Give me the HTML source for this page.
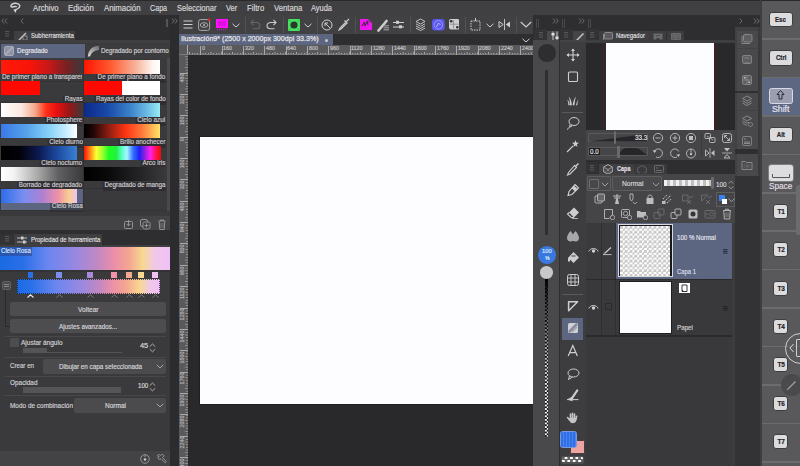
<!DOCTYPE html>
<html><head><meta charset="utf-8"><style>
html,body{margin:0;padding:0;width:800px;height:466px;overflow:hidden;background:#2e2d30}
body{position:relative;font-family:"Liberation Sans",sans-serif}
body div{position:absolute;box-sizing:border-box}
.t{white-space:nowrap;line-height:1;-webkit-text-stroke:0.18px currentColor}
</style></head><body>
<div style="left:0px;top:0px;width:800px;height:466px;background:#2e2d30;"></div>
<div style="left:0px;top:0px;width:800px;height:1px;background:#29282b;"></div>
<div style="left:0px;top:1px;width:761px;height:13.5px;background:#403f42;"></div>
<svg style="position:absolute;left:5px;top:0px;" width="20" height="15" viewBox="0 0 20 15"><path d="M11.2 6.6 C9 6 6.5 8 6 6.5 C5.5 4.8 8 3.2 10.5 3.3 C13.5 3.4 15.5 5 14.5 7 C13.8 8.5 11.5 9.5 9.5 10.3" fill="none" stroke="#d2d1d4" stroke-width="1.5" stroke-linecap="round"/><path d="M8.6 9.8 L11.6 9.6 L10.6 12.9 Z" fill="#d2d1d4"/></svg>
<div class="t" style="left:33.1px;top:3.80px;font-size:8.5px;color:#d8d7da;font-weight:normal;transform:scaleX(0.905011301615304);transform-origin:0 0;">Archivo</div>
<div class="t" style="left:68px;top:3.80px;font-size:8.5px;color:#d8d7da;font-weight:normal;transform:scaleX(0.9236891516968865);transform-origin:0 0;">Edición</div>
<div class="t" style="left:103.5px;top:3.80px;font-size:8.5px;color:#d8d7da;font-weight:normal;transform:scaleX(0.9197574612174186);transform-origin:0 0;">Animación</div>
<div class="t" style="left:149.8px;top:3.80px;font-size:8.5px;color:#d8d7da;font-weight:normal;transform:scaleX(0.8415774964146059);transform-origin:0 0;">Capa</div>
<div class="t" style="left:176.5px;top:3.80px;font-size:8.5px;color:#d8d7da;font-weight:normal;transform:scaleX(0.8894158458861878);transform-origin:0 0;">Seleccionar</div>
<div class="t" style="left:225.6px;top:3.80px;font-size:8.5px;color:#d8d7da;font-weight:normal;transform:scaleX(0.885720934220035);transform-origin:0 0;">Ver</div>
<div class="t" style="left:246.5px;top:3.80px;font-size:8.5px;color:#d8d7da;font-weight:normal;transform:scaleX(0.9133137820207894);transform-origin:0 0;">Filtro</div>
<div class="t" style="left:273.5px;top:3.80px;font-size:8.5px;color:#d8d7da;font-weight:normal;transform:scaleX(0.9103635493960871);transform-origin:0 0;">Ventana</div>
<div class="t" style="left:311.3px;top:3.80px;font-size:8.5px;color:#d8d7da;font-weight:normal;transform:scaleX(0.8748817330592797);transform-origin:0 0;">Ayuda</div>
<svg style="position:absolute;left:0.8px;top:17.8px;" width="7" height="6" viewBox="0 0 7 6"><path d="M3 0.5 L0.8 3 L3 5.5 M6 0.5 L3.8 3 L6 5.5" fill="none" stroke="#6e6d70" stroke-width="1"/></svg>
<svg style="position:absolute;left:19.5px;top:17.8px;" width="4" height="6" viewBox="0 0 4 6"><path d="M3.2 0.5 L1 3 L3.2 5.5" fill="none" stroke="#6e6d70" stroke-width="1"/></svg>
<div style="left:166px;top:19px;width:2px;height:8px;background:#555457;"></div>
<div style="left:0px;top:30px;width:170px;height:10px;background:#2e2d30;"></div>
<svg style="position:absolute;left:5px;top:31px;" width="4.5" height="6" viewBox="0 0 4.5 6"><path d="M0 0.6 H4.2 M0 2.8 H4.2 M0 5 H4.2" stroke="#6a696c" stroke-width="0.75"/></svg>
<div style="left:14px;top:31px;width:61px;height:10px;background:#3f3e41;"></div>
<svg style="position:absolute;left:18px;top:31px;" width="10" height="10" viewBox="0 0 10 10"><path d="M1 9 L8 2" stroke="#bdbcbf" stroke-width="1.6"/><rect x="5" y="5" width="4" height="4" fill="none" stroke="#9a999c" stroke-width="0.8"/></svg>
<div class="t" style="left:30.8px;top:33.01px;font-size:6.6px;color:#dcdbde;font-weight:normal;transform:scaleX(0.9114734111439871);transform-origin:0 0;-webkit-text-stroke:0.2px #dcdbde">Subherramienta</div>
<div style="left:0px;top:40px;width:170px;height:3px;background:#3f3e41;"></div>
<div style="left:0px;top:43px;width:170px;height:173px;background:#3a393c;"></div>
<div style="left:1px;top:44px;width:84px;height:14px;background:#5d6680;"></div>
<svg style="position:absolute;left:4px;top:46px;" width="10" height="10" viewBox="0 0 10 10"><rect x="0.5" y="0.5" width="9" height="9" rx="1.5" fill="#8f93a3" stroke="#b5b8c4" stroke-width="0.8"/><path d="M1 9 L9 1" stroke="#a8abb8" stroke-width="2"/></svg>
<div class="t" style="left:16.9px;top:46.81px;font-size:7.2px;color:#e8e7ea;font-weight:normal;transform:scaleX(0.8659831435047755);transform-origin:0 0;">Degradado</div>
<div style="left:86px;top:44px;width:84px;height:14px;background:#3c3b3e;"></div>
<svg style="position:absolute;left:87px;top:45px;" width="13" height="12" viewBox="0 0 13 12"><defs><linearGradient id="lf" x1="0" y1="1" x2="1" y2="0"><stop offset="0" stop-color="#d8d7da"/><stop offset="1" stop-color="#6a696c"/></linearGradient></defs><path d="M0.8 11.5 C1.5 5 5 1.2 12 0.8 L12 5 C7.5 5.2 4.5 7.5 3 11.5 Z" fill="url(#lf)"/></svg>
<div style="left:100px;top:45px;width:69px;height:12px;overflow:hidden">
<div class="t" style="left:0.8px;top:1.81px;font-size:7.2px;color:#d4d3d6;font-weight:normal;transform:scaleX(0.87);transform-origin:0 0;">Degradado por contorno</div>
</div>
<div style="left:82.5px;top:59.5px;width:1.5px;height:21.5px;background:#313033;"></div>
<div style="left:0px;top:80.5px;width:167px;height:0.6px;background:#333235;"></div>
<div style="left:1px;top:59.5px;width:82px;height:14px;background:linear-gradient(90deg,#ff1a0a 0%,#f81408 35%,#c81818 58%,#7a2022 80%,#3a393c 100%);"></div>
<div style="left:1px;top:73.5px;width:81px;height:7px;overflow:hidden"><div class="t" style="left:1px;top:-0.28px;font-size:7.3px;color:#d0cfd2;transform:scaleX(0.865);transform-origin:0 0">De primer plano a transparente</div></div>
<div style="left:0px;top:80.5px;width:167px;height:0.6px;background:#333235;"></div>
<div style="left:84px;top:59.5px;width:76px;height:14px;background:linear-gradient(90deg,#ff1500 0%,#ff5a30 35%,#f8b8a0 70%,#fff4f0 90%,#ffffff 100%);"></div>
<div class="t" style="right:634.5px;top:74.3px;height:9px;font-size:7.3px;line-height:0;color:transparent;background:rgba(40,39,42,0.55);transform:scaleX(0.865);transform-origin:100% 0;padding-left:2px">De primer plano a fondo</div>
<div class="t" style="right:634.5px;top:73.22px;font-size:7.3px;color:#d0cfd2;font-weight:normal;transform:scaleX(0.865);transform-origin:100% 0;">De primer plano a fondo</div>
<div style="left:82.5px;top:81.0px;width:1.5px;height:21.5px;background:#313033;"></div>
<div style="left:0px;top:102.0px;width:167px;height:0.6px;background:#333235;"></div>
<div style="left:1px;top:81.0px;width:39px;height:14px;background:linear-gradient(90deg,#ff0800 0%,#ff0800 100%);"></div>
<div class="t" style="right:717.5px;top:95.8px;height:9px;font-size:7.3px;line-height:0;color:transparent;background:rgba(40,39,42,0.55);transform:scaleX(0.865);transform-origin:100% 0;padding-left:2px">Rayas</div>
<div class="t" style="right:717.5px;top:94.72px;font-size:7.3px;color:#d0cfd2;font-weight:normal;transform:scaleX(0.865);transform-origin:100% 0;">Rayas</div>
<div style="left:0px;top:102.0px;width:167px;height:0.6px;background:#333235;"></div>
<div style="left:84px;top:81.0px;width:76px;height:14px;background:linear-gradient(90deg,#ff0800 0%,#ff0800 50%,#ffffff 50%,#ffffff 100%);"></div>
<div class="t" style="right:634.5px;top:95.8px;height:9px;font-size:7.3px;line-height:0;color:transparent;background:rgba(40,39,42,0.55);transform:scaleX(0.865);transform-origin:100% 0;padding-left:2px">Rayas del color de fondo</div>
<div class="t" style="right:634.5px;top:94.72px;font-size:7.3px;color:#d0cfd2;font-weight:normal;transform:scaleX(0.865);transform-origin:100% 0;">Rayas del color de fondo</div>
<div style="left:82.5px;top:102.5px;width:1.5px;height:21.5px;background:#313033;"></div>
<div style="left:0px;top:123.5px;width:167px;height:0.6px;background:#333235;"></div>
<div style="left:1px;top:102.5px;width:82px;height:14px;background:linear-gradient(90deg,#ffffff 0%,#fce8e0 25%,#f4a888 42%,#ff3018 55%,#e81010 68%,#901818 85%,#3a393c 100%);"></div>
<div class="t" style="right:717.5px;top:117.3px;height:9px;font-size:7.3px;line-height:0;color:transparent;background:rgba(40,39,42,0.55);transform:scaleX(0.865);transform-origin:100% 0;padding-left:2px">Photosphere</div>
<div class="t" style="right:717.5px;top:116.22px;font-size:7.3px;color:#d0cfd2;font-weight:normal;transform:scaleX(0.865);transform-origin:100% 0;">Photosphere</div>
<div style="left:0px;top:123.5px;width:167px;height:0.6px;background:#333235;"></div>
<div style="left:84px;top:102.5px;width:76px;height:14px;background:linear-gradient(90deg,#0c2a88 0%,#1848a8 30%,#3a80c8 60%,#70c0e8 85%,#98ecf4 100%);"></div>
<div class="t" style="right:634.5px;top:117.3px;height:9px;font-size:7.3px;line-height:0;color:transparent;background:rgba(40,39,42,0.55);transform:scaleX(0.865);transform-origin:100% 0;padding-left:2px">Cielo azul</div>
<div class="t" style="right:634.5px;top:116.22px;font-size:7.3px;color:#d0cfd2;font-weight:normal;transform:scaleX(0.865);transform-origin:100% 0;">Cielo azul</div>
<div style="left:82.5px;top:124.0px;width:1.5px;height:21.5px;background:#313033;"></div>
<div style="left:0px;top:145.0px;width:167px;height:0.6px;background:#333235;"></div>
<div style="left:1px;top:124.0px;width:76px;height:14px;background:linear-gradient(90deg,#3a78e8 0%,#58a4ea 35%,#84d0f8 62%,#c4ecff 85%,#ffffff 100%);"></div>
<div class="t" style="right:717.5px;top:138.8px;height:9px;font-size:7.3px;line-height:0;color:transparent;background:rgba(40,39,42,0.55);transform:scaleX(0.865);transform-origin:100% 0;padding-left:2px">Cielo diurno</div>
<div class="t" style="right:717.5px;top:137.72px;font-size:7.3px;color:#d0cfd2;font-weight:normal;transform:scaleX(0.865);transform-origin:100% 0;">Cielo diurno</div>
<div style="left:0px;top:145.0px;width:167px;height:0.6px;background:#333235;"></div>
<div style="left:84px;top:124.0px;width:76px;height:14px;background:linear-gradient(90deg,#000000 0%,#200606 12%,#9a2014 35%,#ff3412 55%,#ff7438 75%,#ffe468 100%);"></div>
<div class="t" style="right:634.5px;top:138.8px;height:9px;font-size:7.3px;line-height:0;color:transparent;background:rgba(40,39,42,0.55);transform:scaleX(0.865);transform-origin:100% 0;padding-left:2px">Brillo anochecer</div>
<div class="t" style="right:634.5px;top:137.72px;font-size:7.3px;color:#d0cfd2;font-weight:normal;transform:scaleX(0.865);transform-origin:100% 0;">Brillo anochecer</div>
<div style="left:82.5px;top:145.5px;width:1.5px;height:21.5px;background:#313033;"></div>
<div style="left:0px;top:166.5px;width:167px;height:0.6px;background:#333235;"></div>
<div style="left:1px;top:145.5px;width:76px;height:14px;background:linear-gradient(90deg,#000000 0%,#02020a 25%,#0c1a52 50%,#1c4ca2 75%,#3a80d4 100%);"></div>
<div class="t" style="right:717.5px;top:160.3px;height:9px;font-size:7.3px;line-height:0;color:transparent;background:rgba(40,39,42,0.55);transform:scaleX(0.865);transform-origin:100% 0;padding-left:2px">Cielo nocturno</div>
<div class="t" style="right:717.5px;top:159.22px;font-size:7.3px;color:#d0cfd2;font-weight:normal;transform:scaleX(0.865);transform-origin:100% 0;">Cielo nocturno</div>
<div style="left:0px;top:166.5px;width:167px;height:0.6px;background:#333235;"></div>
<div style="left:84px;top:145.5px;width:77px;height:14px;background:linear-gradient(90deg,#ff1010 0%,#ff8818 8%,#ffff30 16%,#a0ff30 24%,#20ff20 32%,#20f040 42%,#60ffd0 50%,#a8f4ff 56%,#3070ff 64%,#2020f0 72%,#9020e0 79%,#ff20f0 86%,#ff1030 95%,#e01010 100%);"></div>
<div class="t" style="right:634.5px;top:160.3px;height:9px;font-size:7.3px;line-height:0;color:transparent;background:rgba(40,39,42,0.55);transform:scaleX(0.865);transform-origin:100% 0;padding-left:2px">Arco iris</div>
<div class="t" style="right:634.5px;top:159.22px;font-size:7.3px;color:#d0cfd2;font-weight:normal;transform:scaleX(0.865);transform-origin:100% 0;">Arco iris</div>
<div style="left:82.5px;top:167.0px;width:1.5px;height:21.5px;background:#313033;"></div>
<div style="left:0px;top:188.0px;width:167px;height:0.6px;background:#333235;"></div>
<div style="left:1px;top:167.0px;width:82px;height:14px;background:linear-gradient(90deg,#ffffff 0%,#f4f4f4 15%,#a8a8a8 45%,#606062 70%,#3a393c 100%);"></div>
<div class="t" style="right:717.5px;top:181.8px;height:9px;font-size:7.3px;line-height:0;color:transparent;background:rgba(40,39,42,0.55);transform:scaleX(0.865);transform-origin:100% 0;padding-left:2px">Borrado de degradado</div>
<div class="t" style="right:717.5px;top:180.72px;font-size:7.3px;color:#d0cfd2;font-weight:normal;transform:scaleX(0.865);transform-origin:100% 0;">Borrado de degradado</div>
<div style="left:0px;top:188.0px;width:167px;height:0.6px;background:#333235;"></div>
<div style="left:84px;top:167.0px;width:82px;height:14px;background:linear-gradient(90deg,#000000 0%,#0a0a0b 30%,#222124 65%,#3a393c 100%);"></div>
<div class="t" style="right:634.5px;top:181.8px;height:9px;font-size:7.3px;line-height:0;color:transparent;background:rgba(40,39,42,0.55);transform:scaleX(0.865);transform-origin:100% 0;padding-left:2px">Degradado de manga</div>
<div class="t" style="right:634.5px;top:180.72px;font-size:7.3px;color:#d0cfd2;font-weight:normal;transform:scaleX(0.865);transform-origin:100% 0;">Degradado de manga</div>
<div style="left:82.5px;top:188.5px;width:1.5px;height:21.5px;background:#313033;"></div>
<div style="left:0px;top:209.5px;width:167px;height:0.6px;background:#333235;"></div>
<div style="left:1px;top:188.5px;width:82px;height:21px;background:#5d6680;"></div>
<div style="left:1px;top:188.5px;width:76px;height:14px;background:linear-gradient(90deg,#2a6ee8 0%,#7a8ef0 30%,#b080d0 55%,#f090a8 75%,#f8d090 90%,#f0c0f8 100%);"></div>
<div class="t" style="right:717.5px;top:203.3px;height:9px;font-size:7.3px;line-height:0;color:transparent;background:rgba(40,39,42,0.55);transform:scaleX(0.865);transform-origin:100% 0;padding-left:2px">Cielo Rosa</div>
<div class="t" style="right:717.5px;top:202.22px;font-size:7.3px;color:#d0cfd2;font-weight:normal;transform:scaleX(0.865);transform-origin:100% 0;">Cielo Rosa</div>
<div style="left:0px;top:209.5px;width:167px;height:0.6px;background:#333235;"></div>
<div style="left:167px;top:58px;width:3px;height:153px;background:#4a494c;"></div>
<div style="left:0px;top:216px;width:170px;height:14px;background:#434245;"></div>
<svg style="position:absolute;left:124px;top:220px;" width="9" height="9" viewBox="0 0 9 9"><rect x="0.5" y="1.5" width="8" height="7" rx="1" fill="none" stroke="#9c9b9e" stroke-width="0.9"/><path d="M4.5 0 V5.5 M2.5 3.8 L4.5 5.8 L6.5 3.8" fill="none" stroke="#9c9b9e" stroke-width="0.9"/></svg>
<svg style="position:absolute;left:140px;top:219px;" width="11" height="11" viewBox="0 0 11 11"><rect x="0.5" y="0.5" width="7" height="7" rx="1.5" fill="none" stroke="#9c9b9e" stroke-width="0.9"/><rect x="3" y="3" width="7" height="7" rx="1.5" fill="#434245" stroke="#9c9b9e" stroke-width="0.9"/><path d="M6.5 4.5 V8.5 M4.5 6.5 H8.5" stroke="#9c9b9e" stroke-width="0.9"/></svg>
<svg style="position:absolute;left:158px;top:219px;" width="8" height="11" viewBox="0 0 8 11"><path d="M0.5 2 H7.5 M2.5 2 V1 H5.5 V2 M1.2 2.5 L1.8 10.5 H6.2 L6.8 2.5" fill="none" stroke="#9c9b9e" stroke-width="0.9"/><path d="M3 4 V9 M5 4 V9" stroke="#9c9b9e" stroke-width="0.6"/></svg>
<div style="left:0px;top:234px;width:13px;height:11px;background:#333235;"></div>
<svg style="position:absolute;left:5px;top:235.5px;" width="4.5" height="6" viewBox="0 0 4.5 6"><path d="M0 0.6 H4.2 M0 2.8 H4.2 M0 5 H4.2" stroke="#6a696c" stroke-width="0.75"/></svg>
<div style="left:14px;top:234px;width:88px;height:11px;background:#3f3e41;"></div>
<svg style="position:absolute;left:17px;top:236px;" width="11" height="8" viewBox="0 0 11 8"><path d="M0 2 H10 M0 6 H10" stroke="#bdbcbf" stroke-width="1"/><rect x="4" y="0.5" width="2.5" height="3" fill="#d0cfd2"/><rect x="6" y="4.5" width="2.5" height="3" fill="#d0cfd2"/></svg>
<div class="t" style="left:30.6px;top:236.91px;font-size:6.6px;color:#dcdbde;font-weight:normal;transform:scaleX(0.9094553792311811);transform-origin:0 0;-webkit-text-stroke:0.2px #dcdbde">Propiedad de herramienta</div>
<div style="left:0px;top:245px;width:170px;height:2px;background:#3f3e41;"></div>
<div style="left:0px;top:247px;width:170px;height:219px;background:#3a393c;"></div>
<div style="left:0px;top:247px;width:170px;height:23px;background:linear-gradient(90deg,#1a6ae4 0%,#2a70e8 14%,#6a86f0 28%,#9a88e0 45%,#c488c0 58%,#ee90a8 68%,#f4a690 76%,#f8d890 84%,#f0c8e8 91%,#f0c0f8 100%);"></div>
<div style="left:0;top:246.5px;height:9.2px;width:32px;background:rgba(50,70,130,0.55)"></div>
<div class="t" style="left:1.2px;top:246.92px;font-size:7.3px;color:#dde6ff;font-weight:normal;transform:scaleX(0.834644029047993);transform-origin:0 0;">Cielo Rosa</div>
<div style="left:0px;top:270px;width:170px;height:2px;background:#333235;"></div>
<div style="left:27.5px;top:272.3px;width:5.5px;height:5.5px;background:#2a6ee8;"></div>
<svg style="position:absolute;left:27.0px;top:294px;" width="7" height="4" viewBox="0 0 7 4"><path d="M0.5 3.5 L3.5 0.8 L6.5 3.5" fill="none" stroke="#e8e7ea" stroke-width="1.2"/></svg>
<div style="left:56px;top:272.3px;width:5.5px;height:5.5px;background:#7a8ef0;"></div>
<svg style="position:absolute;left:55.5px;top:294px;" width="7" height="4" viewBox="0 0 7 4"><path d="M0.5 3.5 L3.5 0.8 L6.5 3.5" fill="none" stroke="#8a898c" stroke-width="0.8"/></svg>
<div style="left:87px;top:272.3px;width:5.5px;height:5.5px;background:#a888d8;"></div>
<svg style="position:absolute;left:86.5px;top:294px;" width="7" height="4" viewBox="0 0 7 4"><path d="M0.5 3.5 L3.5 0.8 L6.5 3.5" fill="none" stroke="#8a898c" stroke-width="0.8"/></svg>
<div style="left:111px;top:272.3px;width:5.5px;height:5.5px;background:#f092a8;"></div>
<svg style="position:absolute;left:110.5px;top:294px;" width="7" height="4" viewBox="0 0 7 4"><path d="M0.5 3.5 L3.5 0.8 L6.5 3.5" fill="none" stroke="#8a898c" stroke-width="0.8"/></svg>
<div style="left:126px;top:272.3px;width:5.5px;height:5.5px;background:#f4a890;"></div>
<svg style="position:absolute;left:125.5px;top:294px;" width="7" height="4" viewBox="0 0 7 4"><path d="M0.5 3.5 L3.5 0.8 L6.5 3.5" fill="none" stroke="#8a898c" stroke-width="0.8"/></svg>
<div style="left:138px;top:272.3px;width:5.5px;height:5.5px;background:#f8d890;"></div>
<svg style="position:absolute;left:137.5px;top:294px;" width="7" height="4" viewBox="0 0 7 4"><path d="M0.5 3.5 L3.5 0.8 L6.5 3.5" fill="none" stroke="#8a898c" stroke-width="0.8"/></svg>
<div style="left:152px;top:272.3px;width:5.5px;height:5.5px;background:#f0c0f4;"></div>
<svg style="position:absolute;left:151.5px;top:294px;" width="7" height="4" viewBox="0 0 7 4"><path d="M0.5 3.5 L3.5 0.8 L6.5 3.5" fill="none" stroke="#8a898c" stroke-width="0.8"/></svg>
<div style="left:17px;top:279px;width:143px;height:15px;background:linear-gradient(90deg,#1a6ae4 0%,#2a70e8 10%,#6a86f0 27%,#9a88e0 45%,#c488c0 58%,#ee90a8 67%,#f4a690 76%,#f8d890 86%,#f0c8e8 93%,#f0c0f8 100%);"></div>
<div style="left:17px;top:279px;width:143px;height:15px;border:0.6px dotted rgba(20,20,20,0.7)"></div>
<svg style="position:absolute;left:2px;top:281px;" width="10" height="10" viewBox="0 0 10 10"><rect x="0.5" y="0.5" width="8" height="8" rx="1.5" fill="#4a494c" stroke="#6a696c" stroke-width="0.8"/><path d="M2 3.5 H7 M2 5.5 H7" stroke="#9a999c" stroke-width="0.8"/></svg>
<div style="left:5.3px;top:289.5px;width:1.2px;height:37px;background:#29282b;"></div>
<div style="left:5.3px;top:325.5px;width:4.7px;height:1.2px;background:#29282b;"></div>
<div style="left:10px;top:302px;width:156px;height:14px;background:#4d4c4f;border-radius:2px"></div>
<div class="t" style="left:77.5px;top:305.82px;font-size:7px;color:#d6d5d8;font-weight:normal;transform:scaleX(0.9407175839619124);transform-origin:0 0;">Voltear</div>
<div style="left:10px;top:319px;width:156px;height:14px;background:#4d4c4f;border-radius:2px"></div>
<div class="t" style="left:58.75px;top:322.67px;font-size:7px;color:#d6d5d8;font-weight:normal;transform:scaleX(0.8995309298426837);transform-origin:0 0;">Ajustes avanzados...</div>
<div style="left:5px;top:335.5px;width:161px;height:1px;background:#48474a;"></div>
<div style="left:5px;top:356.5px;width:161px;height:1px;background:#48474a;"></div>
<div style="left:5px;top:376px;width:161px;height:1px;background:#48474a;"></div>
<div style="left:5px;top:395px;width:161px;height:1px;background:#48474a;"></div>
<div style="left:10px;top:338px;width:9px;height:9px;background:#4d4c4f;border-radius:1px"></div>
<div class="t" style="left:20.5px;top:339.27px;font-size:7px;color:#d0cfd2;font-weight:normal;transform:scaleX(0.9274034449406581);transform-origin:0 0;">Ajustar ángulo</div>
<div style="left:23px;top:348px;width:24px;height:5px;background:#555457;"></div>
<div style="left:47px;top:352px;width:75px;height:1px;background:#555457;"></div>
<div class="t" style="left:139.9px;top:341.51px;font-size:7.2px;color:#dcdbde;font-weight:normal;transform:scaleX(1.0240079922575003);transform-origin:0 0;">45</div>
<svg style="position:absolute;left:148.5px;top:342.5px;" width="7" height="10" viewBox="0 0 7 10"><path d="M0.8 3.6 L3.5 1 L6.2 3.6 M0.8 6.2 L3.5 8.8 L6.2 6.2" fill="none" stroke="#bcbbbe" stroke-width="0.9"/></svg>
<div class="t" style="left:10px;top:362.27px;font-size:7px;color:#d0cfd2;font-weight:normal;transform:scaleX(0.8813100306392941);transform-origin:0 0;">Crear en</div>
<div style="left:43px;top:359px;width:123px;height:15px;background:#4b4a4d;border-radius:2px"></div>
<div class="t" style="left:59px;top:362.57px;font-size:7px;color:#d6d5d8;font-weight:normal;transform:scaleX(0.9038317566187981);transform-origin:0 0;">Dibujar en capa seleccionada</div>
<svg style="position:absolute;left:156px;top:364px;" width="8" height="5" viewBox="0 0 8 5"><path d="M0.8 0.8 L4 4 L7.2 0.8" fill="none" stroke="#b0afb2" stroke-width="0.9"/></svg>
<div class="t" style="left:10px;top:378.82px;font-size:7px;color:#d0cfd2;font-weight:normal;transform:scaleX(0.9177900033895654);transform-origin:0 0;">Opacidad</div>
<div style="left:23px;top:387px;width:98px;height:5.5px;background:#555457;"></div>
<div class="t" style="left:137.6px;top:381.61px;font-size:7.2px;color:#dcdbde;font-weight:normal;transform:scaleX(0.8575026276627851);transform-origin:0 0;">100</div>
<svg style="position:absolute;left:148.5px;top:382.2px;" width="7" height="10" viewBox="0 0 7 10"><path d="M0.8 3.6 L3.5 1 L6.2 3.6 M0.8 6.2 L3.5 8.8 L6.2 6.2" fill="none" stroke="#bcbbbe" stroke-width="0.9"/></svg>
<div class="t" style="left:10px;top:401.57px;font-size:7px;color:#d0cfd2;font-weight:normal;transform:scaleX(0.9199661401351199);transform-origin:0 0;">Modo de combinación</div>
<div style="left:74px;top:398px;width:92px;height:15px;background:#4b4a4d;border-radius:2px"></div>
<div class="t" style="left:105px;top:401.87px;font-size:7px;color:#d6d5d8;font-weight:normal;transform:scaleX(0.9309542280837858);transform-origin:0 0;">Normal</div>
<svg style="position:absolute;left:156px;top:403px;" width="8" height="5" viewBox="0 0 8 5"><path d="M0.8 0.8 L4 4 L7.2 0.8" fill="none" stroke="#b0afb2" stroke-width="0.9"/></svg>
<div style="left:0px;top:451px;width:170px;height:15px;background:#434245;"></div>
<svg style="position:absolute;left:140px;top:454px;" width="10" height="10" viewBox="0 0 10 10"><circle cx="5" cy="5" r="4.3" fill="none" stroke="#9c9b9e" stroke-width="0.9"/><circle cx="5" cy="5.5" r="1.3" fill="#c8c7ca"/><path d="M5 0.7 V3" stroke="#9c9b9e" stroke-width="0.9"/></svg>
<svg style="position:absolute;left:156px;top:453px;" width="11" height="11" viewBox="0 0 11 11"><path d="M1.2 2.8 L2.8 1.2 L4.2 2.6 L4.8 2 C6 1 7.8 1.6 8 3 L6.5 4.5 L7.2 5.2 L10 8.2 C10.4 8.8 9.6 9.8 9 9.6 L5.8 6.5 L5.1 5.8 C4 6.8 2.2 6.4 1.8 5 L3.2 3.6 Z" fill="none" stroke="#9c9b9e" stroke-width="0.9" stroke-linejoin="round"/></svg>
<div style="left:170px;top:15px;width:9px;height:451px;background:#2c2b2e;"></div>
<svg style="position:absolute;left:171px;top:18px;" width="7" height="6" viewBox="0 0 7 6"><path d="M1 0.5 L3.2 3 L1 5.5 M4 0.5 L6.2 3 L4 5.5" fill="none" stroke="#6e6d70" stroke-width="1"/></svg>
<div style="left:179px;top:15px;width:354px;height:19px;background:#414043;"></div>
<svg style="position:absolute;left:183px;top:20px;" width="10" height="9" viewBox="0 0 10 9"><path d="M0.5 1 H9.5 M0.5 4.5 H9.5 M0.5 8 H9.5" stroke="#cfcecf" stroke-width="1.2"/></svg>
<svg style="position:absolute;left:198px;top:18px;" width="13" height="13" viewBox="0 0 13 13"><rect x="0.6" y="1.6" width="11" height="10.8" rx="2" fill="none" stroke="#a8a7aa" stroke-width="1"/><ellipse cx="6.1" cy="7" rx="3.8" ry="2.3" fill="none" stroke="#b8b7ba" stroke-width="0.9"/><circle cx="6.1" cy="7" r="1" fill="#b8b7ba"/><circle cx="11.3" cy="1.6" r="1.3" fill="#e02020"/></svg>
<svg style="position:absolute;left:216px;top:19px;" width="12" height="12" viewBox="0 0 12 12"><rect x="0" y="0" width="12" height="9" fill="#ff10ff"/><rect x="2" y="2" width="8" height="5" fill="#c010c0" opacity="0.5"/><path d="M1 10.5 H11" stroke="#c020c0" stroke-width="1.6" stroke-dasharray="1 1"/></svg>
<svg style="position:absolute;left:232px;top:23px;" width="8" height="5" viewBox="0 0 8 5"><path d="M0.5 0.8 L4 4 L7.5 0.8" fill="none" stroke="#cfcecf" stroke-width="1"/></svg>
<div style="left:245px;top:17px;width:0.8px;height:16px;background:#525154;"></div>
<svg style="position:absolute;left:250px;top:19px;" width="11" height="11" viewBox="0 0 11 11"><path d="M3.5 0.8 L1 3.5 L3.5 6.2 M1 3.5 H6 C8.5 3.5 10 5 10 6.8 C10 8.6 8.5 9.8 6 9.8 H2.5" fill="none" stroke="#666568" stroke-width="1.1"/></svg>
<svg style="position:absolute;left:265.5px;top:19px;" width="11" height="11" viewBox="0 0 11 11"><path d="M7.5 0.8 L10 3.5 L7.5 6.2 M10 3.5 H5 C2.5 3.5 1 5 1 6.8 C1 8.6 2.5 9.8 5 9.8 H8.5" fill="none" stroke="#cfcecf" stroke-width="1.1"/></svg>
<div style="left:283px;top:17px;width:0.8px;height:16px;background:#525154;"></div>
<svg style="position:absolute;left:288px;top:19px;" width="12" height="12" viewBox="0 0 12 12"><rect x="0" y="0" width="12" height="12" fill="#48e060"/><circle cx="6" cy="6" r="3.6" fill="#2a3a2a"/><path d="M0 0 L3 3 M12 0 L9 3 M0 12 L3 9 M12 12 L9 9" stroke="#30c048" stroke-width="1"/></svg>
<svg style="position:absolute;left:304px;top:23px;" width="8" height="5" viewBox="0 0 8 5"><path d="M0.5 0.8 L4 4 L7.5 0.8" fill="none" stroke="#cfcecf" stroke-width="1"/></svg>
<div style="left:317px;top:17px;width:0.8px;height:16px;background:#525154;"></div>
<svg style="position:absolute;left:321px;top:19px;" width="12" height="12" viewBox="0 0 12 12"><circle cx="6" cy="6" r="5" fill="none" stroke="#cfcecf" stroke-width="1"/><path d="M4 4 L9 9 M4 4 H7 M4 4 V7" fill="none" stroke="#cfcecf" stroke-width="1"/></svg>
<svg style="position:absolute;left:338px;top:18px;" width="12" height="13" viewBox="0 0 12 13"><path d="M11 1 L8 4 M9.5 5.5 L6.5 2.5 M8 4 L2 10 L1 12 L3 11 L9 5" fill="none" stroke="#cfcecf" stroke-width="1.1"/></svg>
<div style="left:355px;top:17px;width:0.8px;height:16px;background:#525154;"></div>
<svg style="position:absolute;left:359.6px;top:18.9px;" width="12.3" height="11.1" viewBox="0 0 12.3 11.1"><path d="M0 0 H8 L12.3 4 V11.1 H0 Z" fill="#f018f0"/><path d="M2 7 L4.2 3.5 L5 6.5 L7.2 2.5 L8 6" fill="none" stroke="#502050" stroke-width="1.1"/><path d="M8 0 L12.3 4 H8 Z" fill="#7a3a7a" opacity="0.6"/></svg>
<svg style="position:absolute;left:376.5px;top:18.5px;" width="13" height="13" viewBox="0 0 13 13"><path d="M1.5 11.5 L9.5 2" stroke="#cfcecf" stroke-width="2.6" stroke-linecap="round"/><path d="M6.5 6.8 H12 M6.5 8.8 H12 M6.5 10.8 H12" stroke="#a8a7aa" stroke-width="1"/></svg>
<svg style="position:absolute;left:393px;top:20px;" width="12" height="10" viewBox="0 0 12 10"><path d="M0 2.5 H11 M0 7 H11" stroke="#cfcecf" stroke-width="1"/><rect x="3" y="0.8" width="3" height="3" fill="#cfcecf"/><rect x="6" y="5.3" width="3" height="3" fill="#cfcecf"/></svg>
<div style="left:410px;top:17px;width:0.8px;height:16px;background:#525154;"></div>
<svg style="position:absolute;left:415px;top:18px;" width="11" height="13" viewBox="0 0 11 13"><path d="M5.5 1 L10 3.5 L5.5 6 L1 3.5 Z" fill="none" stroke="#cfcecf" stroke-width="0.9"/><path d="M1 5.8 L5.5 8.3 L10 5.8 M1 8 L5.5 10.5 L10 8 M1 10.2 L5.5 12.5 L10 10.2" fill="none" stroke="#cfcecf" stroke-width="0.9"/></svg>
<svg style="position:absolute;left:431.5px;top:18.5px;" width="13" height="12" viewBox="0 0 13 12"><rect x="0" y="0" width="12.7" height="11.5" rx="3" fill="#5a58ee"/><circle cx="6.3" cy="5.8" r="4.2" fill="none" stroke="#9a98ff" stroke-width="1"/><path d="M4.5 8 L6.5 4 L8.5 6" fill="none" stroke="#c8c0ff" stroke-width="0.9"/></svg>
<svg style="position:absolute;left:448.8px;top:19px;" width="10.5" height="10.5" viewBox="0 0 10.5 10.5"><rect x="0" y="0" width="10.5" height="10.5" rx="2" fill="#cfced1"/><circle cx="2.2" cy="2.3" r="1.3" fill="#303032"/><circle cx="8.3" cy="8.2" r="1.3" fill="#303032"/><path d="M4.5 1 V9.5 M1 5.2 H9.5" stroke="#8a898c" stroke-width="0.8"/></svg>
<div style="left:465px;top:17px;width:0.8px;height:16px;background:#525154;"></div>
<svg style="position:absolute;left:470px;top:18px;" width="12" height="13" viewBox="0 0 12 13"><rect x="1" y="3" width="9" height="9" fill="none" stroke="#cfcecf" stroke-width="1" stroke-dasharray="1.5 1"/><path d="M5.5 0 V3" stroke="#cfcecf" stroke-width="1"/></svg>
<svg style="position:absolute;left:486px;top:23px;" width="8" height="5" viewBox="0 0 8 5"><path d="M0.5 0.8 L4 4 L7.5 0.8" fill="none" stroke="#cfcecf" stroke-width="1"/></svg>
<svg style="position:absolute;left:498px;top:19px;" width="13" height="11" viewBox="0 0 13 11"><path d="M1 2.5 L5.2 5.5 L1 8.5 Z" fill="none" stroke="#cfcecf" stroke-width="1"/><path d="M12 2.5 L7.8 5.5 L12 8.5 Z" fill="#cfcecf"/><path d="M6.5 0 V11" stroke="#cfcecf" stroke-width="0.9"/></svg>
<div style="left:515.5px;top:17px;width:0.8px;height:16px;background:#525154;"></div>
<svg style="position:absolute;left:520px;top:21px;" width="12" height="8" viewBox="0 0 12 8"><path d="M0.8 1 L6 6 L11.2 1" fill="none" stroke="#cfcecf" stroke-width="1.2"/></svg>
<div style="left:179px;top:34px;width:354px;height:11px;background:#2e2d30;"></div>
<div style="left:179px;top:34px;width:153.5px;height:11px;background:#5d6680;"></div>
<div class="t" style="left:181px;top:35.40px;font-size:7.8px;color:#e6e5e8;font-weight:normal;transform:scaleX(0.9099700827510239);transform-origin:0 0;-webkit-text-stroke:0.25px #e6e5e8">Ilustración9* (2500 x 2000px 300dpi 33.3%)</div>
<div style="left:325px;top:38.5px;width:3px;height:3px;background:#c8c7ca;border-radius:50%"></div>
<svg style="position:absolute;left:522px;top:38px;" width="8" height="5" viewBox="0 0 8 5"><path d="M0.5 0.8 L4 4 L7.5 0.8" fill="none" stroke="#cfcecf" stroke-width="1"/></svg>
<div style="left:179px;top:45px;width:354.5px;height:10px;background:#59585b;"></div>
<div style="left:179px;top:55px;width:9px;height:411px;background:#59585b;"></div>
<div style="left:187.3px;top:45px;width:0.8px;height:10px;background:#a8a7aa;"></div>
<div style="left:188px;top:55px;width:345.5px;height:411px;background:#29282b;"></div>
<svg style="position:absolute;left:188px;top:45px;" width="346" height="10" viewBox="0 0 346 10"><rect x="1.33" y="7" width="0.7" height="3" fill="#c8c7ca"/><rect x="4.00" y="8" width="0.7" height="2" fill="#c8c7ca"/><rect x="6.67" y="8" width="0.7" height="2" fill="#c8c7ca"/><rect x="9.33" y="8" width="0.7" height="2" fill="#c8c7ca"/><rect x="12.00" y="7" width="0.7" height="3" fill="#c8c7ca"/><rect x="14.67" y="8" width="0.7" height="2" fill="#c8c7ca"/><rect x="17.34" y="8" width="0.7" height="2" fill="#c8c7ca"/><rect x="20.00" y="8" width="0.7" height="2" fill="#c8c7ca"/><rect x="22.67" y="7" width="0.7" height="3" fill="#c8c7ca"/><rect x="25.34" y="8" width="0.7" height="2" fill="#c8c7ca"/><rect x="28.00" y="8" width="0.7" height="2" fill="#c8c7ca"/><rect x="30.67" y="8" width="0.7" height="2" fill="#c8c7ca"/><rect x="33.34" y="7" width="0.7" height="3" fill="#c8c7ca"/><rect x="36.01" y="8" width="0.7" height="2" fill="#c8c7ca"/><rect x="38.67" y="8" width="0.7" height="2" fill="#c8c7ca"/><rect x="41.34" y="8" width="0.7" height="2" fill="#c8c7ca"/><rect x="44.01" y="7" width="0.7" height="3" fill="#c8c7ca"/><rect x="46.68" y="8" width="0.7" height="2" fill="#c8c7ca"/><rect x="49.34" y="8" width="0.7" height="2" fill="#c8c7ca"/><rect x="52.01" y="8" width="0.7" height="2" fill="#c8c7ca"/><rect x="54.68" y="7" width="0.7" height="3" fill="#c8c7ca"/><rect x="57.35" y="8" width="0.7" height="2" fill="#c8c7ca"/><rect x="60.02" y="8" width="0.7" height="2" fill="#c8c7ca"/><rect x="62.68" y="8" width="0.7" height="2" fill="#c8c7ca"/><rect x="65.35" y="7" width="0.7" height="3" fill="#c8c7ca"/><rect x="68.02" y="8" width="0.7" height="2" fill="#c8c7ca"/><rect x="70.69" y="8" width="0.7" height="2" fill="#c8c7ca"/><rect x="73.35" y="8" width="0.7" height="2" fill="#c8c7ca"/><rect x="76.02" y="7" width="0.7" height="3" fill="#c8c7ca"/><rect x="78.69" y="8" width="0.7" height="2" fill="#c8c7ca"/><rect x="81.36" y="8" width="0.7" height="2" fill="#c8c7ca"/><rect x="84.02" y="8" width="0.7" height="2" fill="#c8c7ca"/><rect x="86.69" y="7" width="0.7" height="3" fill="#c8c7ca"/><rect x="89.36" y="8" width="0.7" height="2" fill="#c8c7ca"/><rect x="92.03" y="8" width="0.7" height="2" fill="#c8c7ca"/><rect x="94.69" y="8" width="0.7" height="2" fill="#c8c7ca"/><rect x="97.36" y="7" width="0.7" height="3" fill="#c8c7ca"/><rect x="100.03" y="8" width="0.7" height="2" fill="#c8c7ca"/><rect x="102.69" y="8" width="0.7" height="2" fill="#c8c7ca"/><rect x="105.36" y="8" width="0.7" height="2" fill="#c8c7ca"/><rect x="108.03" y="7" width="0.7" height="3" fill="#c8c7ca"/><rect x="110.70" y="8" width="0.7" height="2" fill="#c8c7ca"/><rect x="113.36" y="8" width="0.7" height="2" fill="#c8c7ca"/><rect x="116.03" y="8" width="0.7" height="2" fill="#c8c7ca"/><rect x="118.70" y="7" width="0.7" height="3" fill="#c8c7ca"/><rect x="121.37" y="8" width="0.7" height="2" fill="#c8c7ca"/><rect x="124.03" y="8" width="0.7" height="2" fill="#c8c7ca"/><rect x="126.70" y="8" width="0.7" height="2" fill="#c8c7ca"/><rect x="129.37" y="7" width="0.7" height="3" fill="#c8c7ca"/><rect x="132.04" y="8" width="0.7" height="2" fill="#c8c7ca"/><rect x="134.70" y="8" width="0.7" height="2" fill="#c8c7ca"/><rect x="137.37" y="8" width="0.7" height="2" fill="#c8c7ca"/><rect x="140.04" y="7" width="0.7" height="3" fill="#c8c7ca"/><rect x="142.71" y="8" width="0.7" height="2" fill="#c8c7ca"/><rect x="145.38" y="8" width="0.7" height="2" fill="#c8c7ca"/><rect x="148.04" y="8" width="0.7" height="2" fill="#c8c7ca"/><rect x="150.71" y="7" width="0.7" height="3" fill="#c8c7ca"/><rect x="153.38" y="8" width="0.7" height="2" fill="#c8c7ca"/><rect x="156.04" y="8" width="0.7" height="2" fill="#c8c7ca"/><rect x="158.71" y="8" width="0.7" height="2" fill="#c8c7ca"/><rect x="161.38" y="7" width="0.7" height="3" fill="#c8c7ca"/><rect x="164.05" y="8" width="0.7" height="2" fill="#c8c7ca"/><rect x="166.72" y="8" width="0.7" height="2" fill="#c8c7ca"/><rect x="169.38" y="8" width="0.7" height="2" fill="#c8c7ca"/><rect x="172.05" y="7" width="0.7" height="3" fill="#c8c7ca"/><rect x="174.72" y="8" width="0.7" height="2" fill="#c8c7ca"/><rect x="177.38" y="8" width="0.7" height="2" fill="#c8c7ca"/><rect x="180.05" y="8" width="0.7" height="2" fill="#c8c7ca"/><rect x="182.72" y="7" width="0.7" height="3" fill="#c8c7ca"/><rect x="185.39" y="8" width="0.7" height="2" fill="#c8c7ca"/><rect x="188.06" y="8" width="0.7" height="2" fill="#c8c7ca"/><rect x="190.72" y="8" width="0.7" height="2" fill="#c8c7ca"/><rect x="193.39" y="7" width="0.7" height="3" fill="#c8c7ca"/><rect x="196.06" y="8" width="0.7" height="2" fill="#c8c7ca"/><rect x="198.72" y="8" width="0.7" height="2" fill="#c8c7ca"/><rect x="201.39" y="8" width="0.7" height="2" fill="#c8c7ca"/><rect x="204.06" y="7" width="0.7" height="3" fill="#c8c7ca"/><rect x="206.73" y="8" width="0.7" height="2" fill="#c8c7ca"/><rect x="209.40" y="8" width="0.7" height="2" fill="#c8c7ca"/><rect x="212.06" y="8" width="0.7" height="2" fill="#c8c7ca"/><rect x="214.73" y="7" width="0.7" height="3" fill="#c8c7ca"/><rect x="217.40" y="8" width="0.7" height="2" fill="#c8c7ca"/><rect x="220.06" y="8" width="0.7" height="2" fill="#c8c7ca"/><rect x="222.73" y="8" width="0.7" height="2" fill="#c8c7ca"/><rect x="225.40" y="7" width="0.7" height="3" fill="#c8c7ca"/><rect x="228.07" y="8" width="0.7" height="2" fill="#c8c7ca"/><rect x="230.73" y="8" width="0.7" height="2" fill="#c8c7ca"/><rect x="233.40" y="8" width="0.7" height="2" fill="#c8c7ca"/><rect x="236.07" y="7" width="0.7" height="3" fill="#c8c7ca"/><rect x="238.74" y="8" width="0.7" height="2" fill="#c8c7ca"/><rect x="241.41" y="8" width="0.7" height="2" fill="#c8c7ca"/><rect x="244.07" y="8" width="0.7" height="2" fill="#c8c7ca"/><rect x="246.74" y="7" width="0.7" height="3" fill="#c8c7ca"/><rect x="249.41" y="8" width="0.7" height="2" fill="#c8c7ca"/><rect x="252.07" y="8" width="0.7" height="2" fill="#c8c7ca"/><rect x="254.74" y="8" width="0.7" height="2" fill="#c8c7ca"/><rect x="257.41" y="7" width="0.7" height="3" fill="#c8c7ca"/><rect x="260.08" y="8" width="0.7" height="2" fill="#c8c7ca"/><rect x="262.75" y="8" width="0.7" height="2" fill="#c8c7ca"/><rect x="265.41" y="8" width="0.7" height="2" fill="#c8c7ca"/><rect x="268.08" y="7" width="0.7" height="3" fill="#c8c7ca"/><rect x="270.75" y="8" width="0.7" height="2" fill="#c8c7ca"/><rect x="273.42" y="8" width="0.7" height="2" fill="#c8c7ca"/><rect x="276.08" y="8" width="0.7" height="2" fill="#c8c7ca"/><rect x="278.75" y="7" width="0.7" height="3" fill="#c8c7ca"/><rect x="281.42" y="8" width="0.7" height="2" fill="#c8c7ca"/><rect x="284.08" y="8" width="0.7" height="2" fill="#c8c7ca"/><rect x="286.75" y="8" width="0.7" height="2" fill="#c8c7ca"/><rect x="289.42" y="7" width="0.7" height="3" fill="#c8c7ca"/><rect x="292.09" y="8" width="0.7" height="2" fill="#c8c7ca"/><rect x="294.75" y="8" width="0.7" height="2" fill="#c8c7ca"/><rect x="297.42" y="8" width="0.7" height="2" fill="#c8c7ca"/><rect x="300.09" y="7" width="0.7" height="3" fill="#c8c7ca"/><rect x="302.76" y="8" width="0.7" height="2" fill="#c8c7ca"/><rect x="305.43" y="8" width="0.7" height="2" fill="#c8c7ca"/><rect x="308.09" y="8" width="0.7" height="2" fill="#c8c7ca"/><rect x="310.76" y="7" width="0.7" height="3" fill="#c8c7ca"/><rect x="313.43" y="8" width="0.7" height="2" fill="#c8c7ca"/><rect x="316.09" y="8" width="0.7" height="2" fill="#c8c7ca"/><rect x="318.76" y="8" width="0.7" height="2" fill="#c8c7ca"/><rect x="321.43" y="7" width="0.7" height="3" fill="#c8c7ca"/><rect x="324.10" y="8" width="0.7" height="2" fill="#c8c7ca"/><rect x="326.76" y="8" width="0.7" height="2" fill="#c8c7ca"/><rect x="329.43" y="8" width="0.7" height="2" fill="#c8c7ca"/><rect x="332.10" y="7" width="0.7" height="3" fill="#c8c7ca"/><rect x="334.77" y="8" width="0.7" height="2" fill="#c8c7ca"/><rect x="337.44" y="8" width="0.7" height="2" fill="#c8c7ca"/><rect x="340.10" y="8" width="0.7" height="2" fill="#c8c7ca"/><rect x="342.77" y="7" width="0.7" height="3" fill="#c8c7ca"/><rect x="345.44" y="8" width="0.7" height="2" fill="#c8c7ca"/><rect x="348.11" y="8" width="0.7" height="2" fill="#c8c7ca"/><rect x="350.77" y="8" width="0.7" height="2" fill="#c8c7ca"/><rect x="353.44" y="7" width="0.7" height="3" fill="#c8c7ca"/><rect x="356.11" y="8" width="0.7" height="2" fill="#c8c7ca"/></svg>
<div style="left:179px;top:54px;width:354px;height:1px;background:#7a797c"></div>
<div style="left:200.3px;top:46px;width:0.8px;height:9px;background:#a8a7aa;"></div>
<div class="t" style="left:201.9px;top:46.46px;font-size:5.6px;color:#c4c3c6;font-weight:normal;transform:scaleX(0.95);transform-origin:0 0;">0</div>
<div style="left:221.64000000000001px;top:46px;width:0.8px;height:9px;background:#a8a7aa;"></div>
<div class="t" style="left:223.24px;top:46.46px;font-size:5.6px;color:#c4c3c6;font-weight:normal;transform:scaleX(0.95);transform-origin:0 0;">160</div>
<div style="left:242.98000000000002px;top:46px;width:0.8px;height:9px;background:#a8a7aa;"></div>
<div class="t" style="left:244.58px;top:46.46px;font-size:5.6px;color:#c4c3c6;font-weight:normal;transform:scaleX(0.95);transform-origin:0 0;">320</div>
<div style="left:264.32px;top:46px;width:0.8px;height:9px;background:#a8a7aa;"></div>
<div class="t" style="left:265.92px;top:46.46px;font-size:5.6px;color:#c4c3c6;font-weight:normal;transform:scaleX(0.95);transform-origin:0 0;">480</div>
<div style="left:285.66px;top:46px;width:0.8px;height:9px;background:#a8a7aa;"></div>
<div class="t" style="left:287.26000000000005px;top:46.46px;font-size:5.6px;color:#c4c3c6;font-weight:normal;transform:scaleX(0.95);transform-origin:0 0;">640</div>
<div style="left:307.0px;top:46px;width:0.8px;height:9px;background:#a8a7aa;"></div>
<div class="t" style="left:308.6px;top:46.46px;font-size:5.6px;color:#c4c3c6;font-weight:normal;transform:scaleX(0.95);transform-origin:0 0;">800</div>
<div style="left:328.34000000000003px;top:46px;width:0.8px;height:9px;background:#a8a7aa;"></div>
<div class="t" style="left:329.94000000000005px;top:46.46px;font-size:5.6px;color:#c4c3c6;font-weight:normal;transform:scaleX(0.95);transform-origin:0 0;">960</div>
<div style="left:349.68px;top:46px;width:0.8px;height:9px;background:#a8a7aa;"></div>
<div class="t" style="left:351.28000000000003px;top:46.46px;font-size:5.6px;color:#c4c3c6;font-weight:normal;transform:scaleX(0.95);transform-origin:0 0;">1120</div>
<div style="left:371.02px;top:46px;width:0.8px;height:9px;background:#a8a7aa;"></div>
<div class="t" style="left:372.62px;top:46.46px;font-size:5.6px;color:#c4c3c6;font-weight:normal;transform:scaleX(0.95);transform-origin:0 0;">1280</div>
<div style="left:392.36px;top:46px;width:0.8px;height:9px;background:#a8a7aa;"></div>
<div class="t" style="left:393.96000000000004px;top:46.46px;font-size:5.6px;color:#c4c3c6;font-weight:normal;transform:scaleX(0.95);transform-origin:0 0;">1440</div>
<div style="left:413.70000000000005px;top:46px;width:0.8px;height:9px;background:#a8a7aa;"></div>
<div class="t" style="left:415.30000000000007px;top:46.46px;font-size:5.6px;color:#c4c3c6;font-weight:normal;transform:scaleX(0.95);transform-origin:0 0;">1600</div>
<div style="left:435.04px;top:46px;width:0.8px;height:9px;background:#a8a7aa;"></div>
<div class="t" style="left:436.64000000000004px;top:46.46px;font-size:5.6px;color:#c4c3c6;font-weight:normal;transform:scaleX(0.95);transform-origin:0 0;">1760</div>
<div style="left:456.38px;top:46px;width:0.8px;height:9px;background:#a8a7aa;"></div>
<div class="t" style="left:457.98px;top:46.46px;font-size:5.6px;color:#c4c3c6;font-weight:normal;transform:scaleX(0.95);transform-origin:0 0;">1920</div>
<div style="left:477.72px;top:46px;width:0.8px;height:9px;background:#a8a7aa;"></div>
<div class="t" style="left:479.32000000000005px;top:46.46px;font-size:5.6px;color:#c4c3c6;font-weight:normal;transform:scaleX(0.95);transform-origin:0 0;">2080</div>
<div style="left:499.06px;top:46px;width:0.8px;height:9px;background:#a8a7aa;"></div>
<div class="t" style="left:500.66px;top:46.46px;font-size:5.6px;color:#c4c3c6;font-weight:normal;transform:scaleX(0.95);transform-origin:0 0;">2240</div>
<div style="left:520.4000000000001px;top:46px;width:0.8px;height:9px;background:#a8a7aa;"></div>
<div class="t" style="left:522.0000000000001px;top:46.46px;font-size:5.6px;color:#c4c3c6;font-weight:normal;transform:scaleX(0.95);transform-origin:0 0;">2400</div>
<svg style="position:absolute;left:179px;top:55px;" width="9" height="411" viewBox="0 0 9 411"><rect x="6" y="1.45" width="3" height="0.7" fill="#a8a7aa"/><rect x="7" y="4.12" width="2" height="0.7" fill="#a8a7aa"/><rect x="7" y="6.80" width="2" height="0.7" fill="#a8a7aa"/><rect x="7" y="9.47" width="2" height="0.7" fill="#a8a7aa"/><rect x="6" y="12.15" width="3" height="0.7" fill="#a8a7aa"/><rect x="7" y="14.82" width="2" height="0.7" fill="#a8a7aa"/><rect x="7" y="17.50" width="2" height="0.7" fill="#a8a7aa"/><rect x="7" y="20.17" width="2" height="0.7" fill="#a8a7aa"/><rect x="6" y="22.85" width="3" height="0.7" fill="#a8a7aa"/><rect x="7" y="25.52" width="2" height="0.7" fill="#a8a7aa"/><rect x="7" y="28.20" width="2" height="0.7" fill="#a8a7aa"/><rect x="7" y="30.87" width="2" height="0.7" fill="#a8a7aa"/><rect x="6" y="33.55" width="3" height="0.7" fill="#a8a7aa"/><rect x="7" y="36.22" width="2" height="0.7" fill="#a8a7aa"/><rect x="7" y="38.90" width="2" height="0.7" fill="#a8a7aa"/><rect x="7" y="41.57" width="2" height="0.7" fill="#a8a7aa"/><rect x="6" y="44.25" width="3" height="0.7" fill="#a8a7aa"/><rect x="7" y="46.92" width="2" height="0.7" fill="#a8a7aa"/><rect x="7" y="49.60" width="2" height="0.7" fill="#a8a7aa"/><rect x="7" y="52.27" width="2" height="0.7" fill="#a8a7aa"/><rect x="6" y="54.95" width="3" height="0.7" fill="#a8a7aa"/><rect x="7" y="57.62" width="2" height="0.7" fill="#a8a7aa"/><rect x="7" y="60.30" width="2" height="0.7" fill="#a8a7aa"/><rect x="7" y="62.97" width="2" height="0.7" fill="#a8a7aa"/><rect x="6" y="65.65" width="3" height="0.7" fill="#a8a7aa"/><rect x="7" y="68.32" width="2" height="0.7" fill="#a8a7aa"/><rect x="7" y="71.00" width="2" height="0.7" fill="#a8a7aa"/><rect x="7" y="73.67" width="2" height="0.7" fill="#a8a7aa"/><rect x="6" y="76.35" width="3" height="0.7" fill="#a8a7aa"/><rect x="7" y="79.02" width="2" height="0.7" fill="#a8a7aa"/><rect x="7" y="81.70" width="2" height="0.7" fill="#a8a7aa"/><rect x="7" y="84.37" width="2" height="0.7" fill="#a8a7aa"/><rect x="6" y="87.05" width="3" height="0.7" fill="#a8a7aa"/><rect x="7" y="89.72" width="2" height="0.7" fill="#a8a7aa"/><rect x="7" y="92.40" width="2" height="0.7" fill="#a8a7aa"/><rect x="7" y="95.07" width="2" height="0.7" fill="#a8a7aa"/><rect x="6" y="97.75" width="3" height="0.7" fill="#a8a7aa"/><rect x="7" y="100.42" width="2" height="0.7" fill="#a8a7aa"/><rect x="7" y="103.10" width="2" height="0.7" fill="#a8a7aa"/><rect x="7" y="105.77" width="2" height="0.7" fill="#a8a7aa"/><rect x="6" y="108.45" width="3" height="0.7" fill="#a8a7aa"/><rect x="7" y="111.12" width="2" height="0.7" fill="#a8a7aa"/><rect x="7" y="113.80" width="2" height="0.7" fill="#a8a7aa"/><rect x="7" y="116.47" width="2" height="0.7" fill="#a8a7aa"/><rect x="6" y="119.15" width="3" height="0.7" fill="#a8a7aa"/><rect x="7" y="121.82" width="2" height="0.7" fill="#a8a7aa"/><rect x="7" y="124.50" width="2" height="0.7" fill="#a8a7aa"/><rect x="7" y="127.17" width="2" height="0.7" fill="#a8a7aa"/><rect x="6" y="129.85" width="3" height="0.7" fill="#a8a7aa"/><rect x="7" y="132.52" width="2" height="0.7" fill="#a8a7aa"/><rect x="7" y="135.20" width="2" height="0.7" fill="#a8a7aa"/><rect x="7" y="137.88" width="2" height="0.7" fill="#a8a7aa"/><rect x="6" y="140.55" width="3" height="0.7" fill="#a8a7aa"/><rect x="7" y="143.22" width="2" height="0.7" fill="#a8a7aa"/><rect x="7" y="145.90" width="2" height="0.7" fill="#a8a7aa"/><rect x="7" y="148.57" width="2" height="0.7" fill="#a8a7aa"/><rect x="6" y="151.25" width="3" height="0.7" fill="#a8a7aa"/><rect x="7" y="153.92" width="2" height="0.7" fill="#a8a7aa"/><rect x="7" y="156.60" width="2" height="0.7" fill="#a8a7aa"/><rect x="7" y="159.27" width="2" height="0.7" fill="#a8a7aa"/><rect x="6" y="161.95" width="3" height="0.7" fill="#a8a7aa"/><rect x="7" y="164.62" width="2" height="0.7" fill="#a8a7aa"/><rect x="7" y="167.30" width="2" height="0.7" fill="#a8a7aa"/><rect x="7" y="169.97" width="2" height="0.7" fill="#a8a7aa"/><rect x="6" y="172.65" width="3" height="0.7" fill="#a8a7aa"/><rect x="7" y="175.32" width="2" height="0.7" fill="#a8a7aa"/><rect x="7" y="178.00" width="2" height="0.7" fill="#a8a7aa"/><rect x="7" y="180.67" width="2" height="0.7" fill="#a8a7aa"/><rect x="6" y="183.35" width="3" height="0.7" fill="#a8a7aa"/><rect x="7" y="186.02" width="2" height="0.7" fill="#a8a7aa"/><rect x="7" y="188.70" width="2" height="0.7" fill="#a8a7aa"/><rect x="7" y="191.38" width="2" height="0.7" fill="#a8a7aa"/><rect x="6" y="194.05" width="3" height="0.7" fill="#a8a7aa"/><rect x="7" y="196.72" width="2" height="0.7" fill="#a8a7aa"/><rect x="7" y="199.40" width="2" height="0.7" fill="#a8a7aa"/><rect x="7" y="202.07" width="2" height="0.7" fill="#a8a7aa"/><rect x="6" y="204.75" width="3" height="0.7" fill="#a8a7aa"/><rect x="7" y="207.42" width="2" height="0.7" fill="#a8a7aa"/><rect x="7" y="210.10" width="2" height="0.7" fill="#a8a7aa"/><rect x="7" y="212.77" width="2" height="0.7" fill="#a8a7aa"/><rect x="6" y="215.45" width="3" height="0.7" fill="#a8a7aa"/><rect x="7" y="218.12" width="2" height="0.7" fill="#a8a7aa"/><rect x="7" y="220.80" width="2" height="0.7" fill="#a8a7aa"/><rect x="7" y="223.47" width="2" height="0.7" fill="#a8a7aa"/><rect x="6" y="226.15" width="3" height="0.7" fill="#a8a7aa"/><rect x="7" y="228.82" width="2" height="0.7" fill="#a8a7aa"/><rect x="7" y="231.50" width="2" height="0.7" fill="#a8a7aa"/><rect x="7" y="234.17" width="2" height="0.7" fill="#a8a7aa"/><rect x="6" y="236.85" width="3" height="0.7" fill="#a8a7aa"/><rect x="7" y="239.52" width="2" height="0.7" fill="#a8a7aa"/><rect x="7" y="242.20" width="2" height="0.7" fill="#a8a7aa"/><rect x="7" y="244.87" width="2" height="0.7" fill="#a8a7aa"/><rect x="6" y="247.55" width="3" height="0.7" fill="#a8a7aa"/><rect x="7" y="250.22" width="2" height="0.7" fill="#a8a7aa"/><rect x="7" y="252.90" width="2" height="0.7" fill="#a8a7aa"/><rect x="7" y="255.57" width="2" height="0.7" fill="#a8a7aa"/><rect x="6" y="258.25" width="3" height="0.7" fill="#a8a7aa"/><rect x="7" y="260.92" width="2" height="0.7" fill="#a8a7aa"/><rect x="7" y="263.60" width="2" height="0.7" fill="#a8a7aa"/><rect x="7" y="266.27" width="2" height="0.7" fill="#a8a7aa"/><rect x="6" y="268.95" width="3" height="0.7" fill="#a8a7aa"/><rect x="7" y="271.62" width="2" height="0.7" fill="#a8a7aa"/><rect x="7" y="274.30" width="2" height="0.7" fill="#a8a7aa"/><rect x="7" y="276.97" width="2" height="0.7" fill="#a8a7aa"/><rect x="6" y="279.65" width="3" height="0.7" fill="#a8a7aa"/><rect x="7" y="282.32" width="2" height="0.7" fill="#a8a7aa"/><rect x="7" y="285.00" width="2" height="0.7" fill="#a8a7aa"/><rect x="7" y="287.67" width="2" height="0.7" fill="#a8a7aa"/><rect x="6" y="290.35" width="3" height="0.7" fill="#a8a7aa"/><rect x="7" y="293.02" width="2" height="0.7" fill="#a8a7aa"/><rect x="7" y="295.70" width="2" height="0.7" fill="#a8a7aa"/><rect x="7" y="298.38" width="2" height="0.7" fill="#a8a7aa"/><rect x="6" y="301.05" width="3" height="0.7" fill="#a8a7aa"/><rect x="7" y="303.72" width="2" height="0.7" fill="#a8a7aa"/><rect x="7" y="306.40" width="2" height="0.7" fill="#a8a7aa"/><rect x="7" y="309.07" width="2" height="0.7" fill="#a8a7aa"/><rect x="6" y="311.75" width="3" height="0.7" fill="#a8a7aa"/><rect x="7" y="314.42" width="2" height="0.7" fill="#a8a7aa"/><rect x="7" y="317.10" width="2" height="0.7" fill="#a8a7aa"/><rect x="7" y="319.77" width="2" height="0.7" fill="#a8a7aa"/><rect x="6" y="322.45" width="3" height="0.7" fill="#a8a7aa"/><rect x="7" y="325.12" width="2" height="0.7" fill="#a8a7aa"/><rect x="7" y="327.80" width="2" height="0.7" fill="#a8a7aa"/><rect x="7" y="330.47" width="2" height="0.7" fill="#a8a7aa"/><rect x="6" y="333.15" width="3" height="0.7" fill="#a8a7aa"/><rect x="7" y="335.82" width="2" height="0.7" fill="#a8a7aa"/><rect x="7" y="338.50" width="2" height="0.7" fill="#a8a7aa"/><rect x="7" y="341.17" width="2" height="0.7" fill="#a8a7aa"/><rect x="6" y="343.85" width="3" height="0.7" fill="#a8a7aa"/><rect x="7" y="346.52" width="2" height="0.7" fill="#a8a7aa"/><rect x="7" y="349.20" width="2" height="0.7" fill="#a8a7aa"/><rect x="7" y="351.87" width="2" height="0.7" fill="#a8a7aa"/><rect x="6" y="354.55" width="3" height="0.7" fill="#a8a7aa"/><rect x="7" y="357.22" width="2" height="0.7" fill="#a8a7aa"/><rect x="7" y="359.90" width="2" height="0.7" fill="#a8a7aa"/><rect x="7" y="362.57" width="2" height="0.7" fill="#a8a7aa"/><rect x="6" y="365.25" width="3" height="0.7" fill="#a8a7aa"/><rect x="7" y="367.92" width="2" height="0.7" fill="#a8a7aa"/><rect x="7" y="370.60" width="2" height="0.7" fill="#a8a7aa"/><rect x="7" y="373.27" width="2" height="0.7" fill="#a8a7aa"/><rect x="6" y="375.95" width="3" height="0.7" fill="#a8a7aa"/><rect x="7" y="378.62" width="2" height="0.7" fill="#a8a7aa"/><rect x="7" y="381.30" width="2" height="0.7" fill="#a8a7aa"/><rect x="7" y="383.97" width="2" height="0.7" fill="#a8a7aa"/><rect x="6" y="386.65" width="3" height="0.7" fill="#a8a7aa"/><rect x="7" y="389.32" width="2" height="0.7" fill="#a8a7aa"/><rect x="7" y="392.00" width="2" height="0.7" fill="#a8a7aa"/><rect x="7" y="394.67" width="2" height="0.7" fill="#a8a7aa"/><rect x="6" y="397.35" width="3" height="0.7" fill="#a8a7aa"/><rect x="7" y="400.02" width="2" height="0.7" fill="#a8a7aa"/><rect x="7" y="402.70" width="2" height="0.7" fill="#a8a7aa"/><rect x="7" y="405.37" width="2" height="0.7" fill="#a8a7aa"/><rect x="6" y="408.05" width="3" height="0.7" fill="#a8a7aa"/><rect x="7" y="410.72" width="2" height="0.7" fill="#a8a7aa"/><rect x="7" y="413.40" width="2" height="0.7" fill="#a8a7aa"/><rect x="7" y="416.07" width="2" height="0.7" fill="#a8a7aa"/><rect x="6" y="418.75" width="3" height="0.7" fill="#a8a7aa"/><rect x="7" y="421.42" width="2" height="0.7" fill="#a8a7aa"/><rect x="7" y="424.10" width="2" height="0.7" fill="#a8a7aa"/><rect x="7" y="426.77" width="2" height="0.7" fill="#a8a7aa"/></svg>
<div style="left:180px;top:72.64999999999998px;width:8px;height:0.8px;background:#a8a7aa;"></div>
<div class="t" style="left:179.6px;top:73.44999999999997px;font-size:5.6px;color:#b4b3b6;transform:rotate(-90deg) translate(-100%,0) scaleX(0.95);transform-origin:0 0;line-height:5.6px">480</div>
<div style="left:180px;top:93.99999999999999px;width:8px;height:0.8px;background:#a8a7aa;"></div>
<div class="t" style="left:179.6px;top:94.79999999999998px;font-size:5.6px;color:#b4b3b6;transform:rotate(-90deg) translate(-100%,0) scaleX(0.95);transform-origin:0 0;line-height:5.6px">320</div>
<div style="left:180px;top:115.35px;width:8px;height:0.8px;background:#a8a7aa;"></div>
<div class="t" style="left:179.6px;top:116.14999999999999px;font-size:5.6px;color:#b4b3b6;transform:rotate(-90deg) translate(-100%,0) scaleX(0.95);transform-origin:0 0;line-height:5.6px">160</div>
<div style="left:180px;top:136.7px;width:8px;height:0.8px;background:#a8a7aa;"></div>
<div class="t" style="left:179.6px;top:137.5px;font-size:5.6px;color:#b4b3b6;transform:rotate(-90deg) translate(-100%,0) scaleX(0.95);transform-origin:0 0;line-height:5.6px">0</div>
<div style="left:180px;top:158.04999999999998px;width:8px;height:0.8px;background:#a8a7aa;"></div>
<div class="t" style="left:179.6px;top:158.85px;font-size:5.6px;color:#b4b3b6;transform:rotate(-90deg) translate(-100%,0) scaleX(0.95);transform-origin:0 0;line-height:5.6px">160</div>
<div style="left:180px;top:179.39999999999998px;width:8px;height:0.8px;background:#a8a7aa;"></div>
<div class="t" style="left:179.6px;top:180.2px;font-size:5.6px;color:#b4b3b6;transform:rotate(-90deg) translate(-100%,0) scaleX(0.95);transform-origin:0 0;line-height:5.6px">320</div>
<div style="left:180px;top:200.75px;width:8px;height:0.8px;background:#a8a7aa;"></div>
<div class="t" style="left:179.6px;top:201.55px;font-size:5.6px;color:#b4b3b6;transform:rotate(-90deg) translate(-100%,0) scaleX(0.95);transform-origin:0 0;line-height:5.6px">480</div>
<div style="left:180px;top:222.1px;width:8px;height:0.8px;background:#a8a7aa;"></div>
<div class="t" style="left:179.6px;top:222.9px;font-size:5.6px;color:#b4b3b6;transform:rotate(-90deg) translate(-100%,0) scaleX(0.95);transform-origin:0 0;line-height:5.6px">640</div>
<div style="left:180px;top:243.45px;width:8px;height:0.8px;background:#a8a7aa;"></div>
<div class="t" style="left:179.6px;top:244.25px;font-size:5.6px;color:#b4b3b6;transform:rotate(-90deg) translate(-100%,0) scaleX(0.95);transform-origin:0 0;line-height:5.6px">800</div>
<div style="left:180px;top:264.8px;width:8px;height:0.8px;background:#a8a7aa;"></div>
<div class="t" style="left:179.6px;top:265.6px;font-size:5.6px;color:#b4b3b6;transform:rotate(-90deg) translate(-100%,0) scaleX(0.95);transform-origin:0 0;line-height:5.6px">960</div>
<div style="left:180px;top:286.15px;width:8px;height:0.8px;background:#a8a7aa;"></div>
<div class="t" style="left:179.6px;top:286.95px;font-size:5.6px;color:#b4b3b6;transform:rotate(-90deg) translate(-100%,0) scaleX(0.95);transform-origin:0 0;line-height:5.6px">1120</div>
<div style="left:180px;top:307.5px;width:8px;height:0.8px;background:#a8a7aa;"></div>
<div class="t" style="left:179.6px;top:308.3px;font-size:5.6px;color:#b4b3b6;transform:rotate(-90deg) translate(-100%,0) scaleX(0.95);transform-origin:0 0;line-height:5.6px">1280</div>
<div style="left:180px;top:328.85px;width:8px;height:0.8px;background:#a8a7aa;"></div>
<div class="t" style="left:179.6px;top:329.65000000000003px;font-size:5.6px;color:#b4b3b6;transform:rotate(-90deg) translate(-100%,0) scaleX(0.95);transform-origin:0 0;line-height:5.6px">1440</div>
<div style="left:180px;top:350.2px;width:8px;height:0.8px;background:#a8a7aa;"></div>
<div class="t" style="left:179.6px;top:351.0px;font-size:5.6px;color:#b4b3b6;transform:rotate(-90deg) translate(-100%,0) scaleX(0.95);transform-origin:0 0;line-height:5.6px">1600</div>
<div style="left:180px;top:371.55px;width:8px;height:0.8px;background:#a8a7aa;"></div>
<div class="t" style="left:179.6px;top:372.35px;font-size:5.6px;color:#b4b3b6;transform:rotate(-90deg) translate(-100%,0) scaleX(0.95);transform-origin:0 0;line-height:5.6px">1760</div>
<div style="left:180px;top:392.90000000000003px;width:8px;height:0.8px;background:#a8a7aa;"></div>
<div class="t" style="left:179.6px;top:393.70000000000005px;font-size:5.6px;color:#b4b3b6;transform:rotate(-90deg) translate(-100%,0) scaleX(0.95);transform-origin:0 0;line-height:5.6px">1920</div>
<div style="left:180px;top:414.25px;width:8px;height:0.8px;background:#a8a7aa;"></div>
<div class="t" style="left:179.6px;top:415.05px;font-size:5.6px;color:#b4b3b6;transform:rotate(-90deg) translate(-100%,0) scaleX(0.95);transform-origin:0 0;line-height:5.6px">2080</div>
<div style="left:180px;top:435.6px;width:8px;height:0.8px;background:#a8a7aa;"></div>
<div class="t" style="left:179.6px;top:436.40000000000003px;font-size:5.6px;color:#b4b3b6;transform:rotate(-90deg) translate(-100%,0) scaleX(0.95);transform-origin:0 0;line-height:5.6px">2240</div>
<div style="left:180px;top:456.95px;width:8px;height:0.8px;background:#a8a7aa;"></div>
<div class="t" style="left:179.6px;top:457.75px;font-size:5.6px;color:#b4b3b6;transform:rotate(-90deg) translate(-100%,0) scaleX(0.95);transform-origin:0 0;line-height:5.6px">2400</div>
<div style="left:199px;top:135.8px;width:335px;height:268.8px;background:#1f1e21;"></div>
<div style="left:200px;top:136.7px;width:333.1px;height:267px;background:#fdfcfe;"></div>
<div style="left:535.5px;top:19px;width:1px;height:9px;background:#4a494c;"></div>
<div style="left:537.5px;top:19px;width:1px;height:9px;background:#4a494c;"></div>
<div style="left:561.5px;top:19px;width:1px;height:9px;background:#4a494c;"></div>
<div style="left:563.5px;top:19px;width:1px;height:9px;background:#4a494c;"></div>
<div style="left:588px;top:19px;width:1px;height:9px;background:#4a494c;"></div>
<div style="left:590px;top:19px;width:1px;height:9px;background:#4a494c;"></div>
<svg style="position:absolute;left:552px;top:18px;" width="7" height="6" viewBox="0 0 7 6"><path d="M1 0.5 L3.2 3 L1 5.5 M4 0.5 L6.2 3 L4 5.5" fill="none" stroke="#6e6d70" stroke-width="1"/></svg>
<svg style="position:absolute;left:578px;top:18px;" width="7" height="6" viewBox="0 0 7 6"><path d="M1 0.5 L3.2 3 L1 5.5 M4 0.5 L6.2 3 L4 5.5" fill="none" stroke="#6e6d70" stroke-width="1"/></svg>
<svg style="position:absolute;left:739px;top:18px;" width="4" height="6" viewBox="0 0 4 6"><path d="M0.8 0.5 L3 3 L0.8 5.5" fill="none" stroke="#6e6d70" stroke-width="1"/></svg>
<svg style="position:absolute;left:753px;top:18px;" width="7" height="6" viewBox="0 0 7 6"><path d="M1 0.5 L3.2 3 L1 5.5 M4 0.5 L6.2 3 L4 5.5" fill="none" stroke="#6e6d70" stroke-width="1"/></svg>
<div style="left:534px;top:29px;width:13px;height:11px;background:#333235;"></div>
<svg style="position:absolute;left:538.5px;top:31.5px;" width="4.5" height="6" viewBox="0 0 4.5 6"><path d="M0 0.6 H4.2 M0 2.8 H4.2 M0 5 H4.2" stroke="#6a696c" stroke-width="0.75"/></svg>
<div style="left:547px;top:31px;width:12px;height:9px;background:#49484b;"></div>
<svg style="position:absolute;left:551px;top:31px;" width="8" height="10" viewBox="0 0 8 10"><path d="M2 0.5 V9.5 M6 0.5 V9.5" stroke="#d0cfd2" stroke-width="0.9"/><rect x="0.5" y="2" width="3" height="2.5" fill="#e0dfe2"/><rect x="4.5" y="5.5" width="3" height="2.5" fill="#e0dfe2"/></svg>
<div style="left:533.2px;top:40px;width:25.8px;height:426px;background:#49484b;"></div>
<div style="left:538px;top:44px;width:17.5px;height:17.5px;background:#2e2d30;border-radius:50%"></div>
<div style="left:545px;top:70px;width:3px;height:164.5px;background:#2f2e31;"></div>
<div style="left:538px;top:246px;width:18px;height:17.5px;background:#3a78e0;border-radius:50%"></div>
<div class="t" style="left:542.2px;top:247.75px;font-size:6.2px;color:#d8ecff;font-weight:normal;transform:scaleX(0.9378011825237847);transform-origin:0 0;">100</div>
<div class="t" style="left:547px;width:0;display:flex;justify-content:center;top:256.34px;font-size:5.5px;color:#d8ecff;font-weight:normal;"><span style="display:inline-block;transform:scaleX(0.9);transform-origin:50% 0">%</span></div>
<div style="left:544.8px;top:277px;width:3.6px;height:160px;border-radius:1.5px;background:linear-gradient(180deg,rgba(0,0,0,1) 0%,rgba(0,0,0,0.6) 25%,rgba(0,0,0,0.15) 55%,rgba(0,0,0,0) 75%),conic-gradient(#fff 0 25%,#111 0 50%,#fff 0 75%,#111 0) 0 0/3.6px 3.6px"></div>
<div style="left:540px;top:266px;width:13px;height:12.5px;background:#c8c7ca;border-radius:50%"></div>
<div style="left:559.5px;top:29px;width:13px;height:11px;background:#333235;"></div>
<svg style="position:absolute;left:564px;top:31.5px;" width="4.5" height="6" viewBox="0 0 4.5 6"><path d="M0 0.6 H4.2 M0 2.8 H4.2 M0 5 H4.2" stroke="#6a696c" stroke-width="0.75"/></svg>
<div style="left:573px;top:31px;width:12.5px;height:9px;background:#444346;"></div>
<svg style="position:absolute;left:575px;top:31px;" width="10" height="10" viewBox="0 0 10 10"><path d="M1 9 L8 2 L9 3 L2 10 Z" fill="#c8c7ca"/></svg>
<div style="left:559.5px;top:40px;width:26px;height:2px;background:#444346;"></div>
<div style="left:559.5px;top:42px;width:26px;height:424px;background:#3d3c3f;"></div>
<svg style="position:absolute;left:566.0px;top:47.5px;" width="14" height="14" viewBox="0 0 14 14"><path d="M7 1 V13 M1 7 H13" stroke="#cfcecf" stroke-width="1.1"/><path d="M7 0.5 L5 3 H9 Z M7 13.5 L5 11 H9 Z M0.5 7 L3 5 V9 Z M13.5 7 L11 5 V9 Z" fill="#cfcecf"/></svg>
<svg style="position:absolute;left:566.0px;top:70.0px;" width="14" height="14" viewBox="0 0 14 14"><rect x="2.5" y="2" width="9" height="9.5" rx="1" fill="none" stroke="#cfcecf" stroke-width="1.1"/></svg>
<svg style="position:absolute;left:566.0px;top:93.5px;" width="14" height="14" viewBox="0 0 14 14"><path d="M1.2 5.6 C2.6 6.8 3.6 8.8 3.7 11.3 L2.4 11.3 C2.4 9.2 2 7.3 1.2 5.6 Z M2.8 2.4 C4.6 4.5 5.7 7.6 5.8 11.3 L3.9 11.3 C4 8.2 3.8 5.2 2.8 2.4 Z M10 2.4 C8.2 4.6 7 7.6 6.6 11.3 L8.5 11.3 C8.5 8.2 9 5.2 10 2.4 Z M12.6 5.6 C11.4 7 10.4 9 10 11.3 L11.2 11.3 C11.3 9.2 11.8 7.3 12.6 5.6 Z" fill="#cfcecf"/></svg>
<div style="left:562px;top:111.5px;width:21px;height:0.8px;background:#5a595c;"></div>
<svg style="position:absolute;left:566.0px;top:116.0px;" width="14" height="14" viewBox="0 0 14 14"><ellipse cx="8" cy="5.5" rx="5" ry="4" fill="none" stroke="#cfcecf" stroke-width="1"/><path d="M4 8.5 C3 10 4 11.5 5.5 10.5 C6.5 9.5 4.5 9 3.5 11 C3 12 2 13 1 13.5" fill="none" stroke="#cfcecf" stroke-width="1"/></svg>
<svg style="position:absolute;left:566.0px;top:138.5px;" width="14" height="14" viewBox="0 0 14 14"><path d="M1 13 L7 7" stroke="#cfcecf" stroke-width="1.1"/><path d="M9.5 1 L10.3 3.5 L13 3.8 L10.8 5.5 L11.5 8 L9.5 6.6 L7.3 8 L8 5.5 L6 3.8 L8.7 3.5 Z" fill="#cfcecf"/></svg>
<svg style="position:absolute;left:566.0px;top:161.5px;" width="14" height="14" viewBox="0 0 14 14"><path d="M12 1 L13 2 L10 5 L9 4 Z" fill="#cfcecf"/><path d="M8.5 3.5 L10.5 5.5 L4 12 L1.5 13 L2.5 10.5 Z" fill="none" stroke="#cfcecf" stroke-width="1.1"/></svg>
<svg style="position:absolute;left:566.0px;top:182.5px;" width="14" height="14" viewBox="0 0 14 14"><path d="M9 1.5 L12.5 5 L6 11.5 L2 12.5 L3 8.5 Z" fill="none" stroke="#cfcecf" stroke-width="1.1"/><path d="M8 2.5 L11.5 6 L9 8.5 L5.5 5 Z" fill="#cfcecf"/></svg>
<svg style="position:absolute;left:566.0px;top:206.0px;" width="14" height="14" viewBox="0 0 14 14"><path d="M8 1.5 L13 6.5 L8 11.5 L3 6.5 Z" fill="#cfcecf"/><path d="M3 6.5 L1.5 8 L5 11.5 L8 11.5" fill="none" stroke="#cfcecf" stroke-width="1.1"/><path d="M6 12.5 H12" stroke="#cfcecf" stroke-width="0.8"/></svg>
<svg style="position:absolute;left:566.0px;top:228.5px;" width="14" height="14" viewBox="0 0 14 14"><path d="M4.5 2 C2 5 1 7 1 9 C1 11 2.5 12.5 4.5 12.5 C6.5 12.5 8 11 8 9 C8 7 7 5 4.5 2 Z M9.5 2 C7 5 6 7 6 9 C6 11 7.5 12.5 9.5 12.5 C11.5 12.5 13 11 13 9 C13 7 12 5 9.5 2 Z" fill="#a8a7aa"/></svg>
<svg style="position:absolute;left:566.0px;top:250.5px;" width="14" height="14" viewBox="0 0 14 14"><path d="M7.5 1 L13 6.5 L7.5 12 L4 8.5 L4 10.5 L2 10.5 L2 7 L7.5 1 Z" fill="#cfcecf"/><path d="M5.5 5 H9.5" stroke="#3d3c3f" stroke-width="1"/></svg>
<svg style="position:absolute;left:566.0px;top:273.0px;" width="14" height="14" viewBox="0 0 14 14"><rect x="1.5" y="1.5" width="11" height="11" rx="2" fill="none" stroke="#cfcecf" stroke-width="1"/><path d="M1.5 5 H12.5 M1.5 9 H12.5 M5 1.5 V12.5 M9 1.5 V12.5" stroke="#cfcecf" stroke-width="0.9"/></svg>
<div style="left:562px;top:294px;width:21px;height:0.8px;background:#5a595c;"></div>
<svg style="position:absolute;left:566px;top:299px;" width="14" height="14" viewBox="0 0 14 14"><path d="M2.6 2.8 H11.6 L2.6 11.8 Z" fill="none" stroke="#cfcecf" stroke-width="1.5" stroke-linejoin="round"/></svg>
<div style="left:562px;top:318px;width:21px;height:21.5px;background:#5d6680;"></div>
<svg style="position:absolute;left:566.0px;top:320.5px;" width="14" height="14" viewBox="0 0 14 14"><rect x="2" y="2" width="10" height="10" rx="1.5" fill="#d0d0d8"/><path d="M3 11 L11 3" stroke="#8a8a98" stroke-width="2.5"/><path d="M6 11 L11 6" stroke="#a0a0b0" stroke-width="1.5"/></svg>
<svg style="position:absolute;left:566px;top:344px;" width="14" height="14" viewBox="0 0 14 14"><path d="M2.2 12 L6.8 1.5 L11.4 12 M3.9 8.6 H9.7" fill="none" stroke="#cfcecf" stroke-width="1.2"/></svg>
<svg style="position:absolute;left:566.0px;top:366.5px;" width="14" height="14" viewBox="0 0 14 14"><ellipse cx="7.5" cy="6" rx="5.5" ry="4" fill="none" stroke="#cfcecf" stroke-width="1"/><path d="M3.5 9 L2.5 12.5 L6.5 10" fill="none" stroke="#cfcecf" stroke-width="1"/></svg>
<svg style="position:absolute;left:566.0px;top:389.0px;" width="14" height="14" viewBox="0 0 14 14"><path d="M11.2 1.5 L6.2 8.8" stroke="#cfcecf" stroke-width="2.2" stroke-linecap="round"/><path d="M1 10.6 L6.5 7.6 L6.5 12.2 Z" fill="#cfcecf"/><path d="M1 10.6 H12.5" stroke="#cfcecf" stroke-width="1"/></svg>
<svg style="position:absolute;left:566px;top:411px;" width="12" height="13" viewBox="0 0 12 13"><path d="M4.5 3 V7.5 M6.5 2.4 V7.5 M8.5 3 V7.5 M10.6 5.2 L10 8.2 M1.6 6.6 L3.6 9" stroke="#c4c3c6" stroke-width="1.6" stroke-linecap="round"/><path d="M3.2 7 H11 L10.2 10 C9.5 11.8 8.4 12.2 6.8 12.2 C5.2 12.2 4.2 11.6 3.6 10 Z" fill="#c4c3c6"/></svg>
<div style="left:569.5px;top:439.5px;width:15px;height:14.5px;background:#eea4a0;border-radius:1.5px;border:1px solid #4a3a3c"></div>
<div style="left:560.2px;top:431px;width:16.8px;height:16.8px;background:repeating-linear-gradient(90deg,#2f6fe6 0 2px,#4a84ee 2px 3px);border-radius:2.5px;border:1px solid #7a9ae0;box-sizing:border-box"></div>
<div style="left:560.8px;top:455.5px;width:23px;height:8.3px;border-radius:2.5px;background:#505052"></div>
<div style="left:562px;top:457px;width:21px;height:5.4px;background:conic-gradient(#fff 0 25%,#666 0 50%,#fff 0 75%,#666 0) 0 0/5.4px 5.4px;border-radius:1px"></div>
<div style="left:586px;top:29px;width:12px;height:11px;background:#333235;"></div>
<svg style="position:absolute;left:590px;top:31.5px;" width="4.5" height="6" viewBox="0 0 4.5 6"><path d="M0 0.6 H4.2 M0 2.8 H4.2 M0 5 H4.2" stroke="#6a696c" stroke-width="0.75"/></svg>
<div style="left:599px;top:31px;width:49px;height:10px;background:#3f3e41;"></div>
<svg style="position:absolute;left:603px;top:32px;" width="10" height="9" viewBox="0 0 10 9"><rect x="1.5" y="0.5" width="8" height="6.5" rx="1" fill="#5a595c" stroke="#9a999c" stroke-width="0.8"/><path d="M0.5 2 V8.5 H8" fill="none" stroke="#9a999c" stroke-width="0.8"/></svg>
<div class="t" style="left:616.4px;top:33.16px;font-size:6.6px;color:#dcdbde;font-weight:normal;transform:scaleX(0.8951430167132727);transform-origin:0 0;-webkit-text-stroke:0.2px #dcdbde">Navegador</div>
<div style="left:648px;top:31px;width:18px;height:9.5px;background:#3d3c3f;"></div>
<svg style="position:absolute;left:652.5px;top:32.5px;" width="10" height="7" viewBox="0 0 10 7"><path d="M0.5 0.5 H9.5 V6.5 H7 L6 5 H4 L3 6.5 H0.5 Z" fill="#6a696c"/><path d="M3 2.5 H7" stroke="#4a494c" stroke-width="0.8"/></svg>
<div style="left:666.6px;top:31px;width:17.2px;height:9.5px;background:#3d3c3f;"></div>
<svg style="position:absolute;left:670.5px;top:32.5px;" width="10" height="7" viewBox="0 0 10 7"><rect x="0" y="0" width="10" height="7" rx="1" fill="#6a696c"/><path d="M1 1.8 H3 M4.5 1.8 H9 M1 4 H9 M1 5.8 H4 M6 5.8 H9" stroke="#4e4d50" stroke-width="0.7"/></svg>
<div style="left:586px;top:40px;width:149px;height:3px;background:#3e3d40;"></div>
<div style="left:586px;top:43px;width:149px;height:87px;background:#29282b;"></div>
<div style="left:602.5px;top:43px;width:1px;height:87px;background:repeating-linear-gradient(180deg,#6a1c1c 0 1px,transparent 1px 2px)"></div>
<div style="left:606px;top:43px;width:108.3px;height:87px;background:#fdfcfe;"></div>
<div style="left:714.3px;top:43px;width:1.2px;height:87px;background:#5a1414;"></div>
<div style="left:586px;top:130px;width:149px;height:30px;background:#454447;"></div>
<div style="left:588px;top:132.5px;width:59.5px;height:9.5px;background:#454447;border:1px solid #5a595c;box-sizing:border-box;border-radius:1px"></div>
<svg style="position:absolute;left:589px;top:133.5px;" width="58" height="8" viewBox="0 0 58 8"><path d="M0 7.5 L58 0 V7.5 Z" fill="#262528"/></svg>
<div class="t" style="left:634.8px;top:133.65px;font-size:7.5px;color:#e6e5e8;font-weight:normal;transform:scaleX(0.8495651010303761);transform-origin:0 0;">33.3</div>
<div style="left:613.5px;top:131px;width:2.5px;height:12.5px;background:#6a696c;border-radius:1px"></div>
<div style="left:588px;top:147px;width:59.5px;height:9px;background:#454447;border:1px solid #5a595c;box-sizing:border-box;border-radius:1px"></div>
<svg style="position:absolute;left:589px;top:148px;" width="58" height="7" viewBox="0 0 58 7"><path d="M0 7 L28 7 C32 4 34 0 37 0 L47 0 C50 0 54 4 58 7 Z" fill="#262528"/></svg>
<div style="left:589px;top:148px;width:11px;height:7px;background:#1e1d20;"></div>
<div class="t" style="left:590px;top:147.62px;font-size:7.3px;color:#e6e5e8;font-weight:normal;transform:scaleX(0.847541145166059);transform-origin:0 0;">0.0</div>
<div style="left:617px;top:146px;width:2.5px;height:12px;background:#6a696c;border-radius:1px"></div>
<svg style="position:absolute;left:652px;top:131.5px;" width="12" height="12" viewBox="0 0 12 12"><circle cx="6" cy="6" r="4.6" fill="none" stroke="#c0bfc2" stroke-width="0.9"/><path d="M3.5 6 H8.5" stroke="#c0bfc2" stroke-width="0.9"/></svg>
<svg style="position:absolute;left:668.7px;top:131.5px;" width="12" height="12" viewBox="0 0 12 12"><circle cx="6" cy="6" r="4.6" fill="none" stroke="#c0bfc2" stroke-width="0.9"/><path d="M3.5 6 H8.5 M6 3.5 V8.5" stroke="#c0bfc2" stroke-width="0.9"/></svg>
<svg style="position:absolute;left:685.3px;top:131.5px;" width="12" height="12" viewBox="0 0 12 12"><circle cx="6" cy="6" r="4.6" fill="none" stroke="#c0bfc2" stroke-width="0.9"/><rect x="4" y="4" width="4" height="4" fill="#c0bfc2"/></svg>
<div style="left:701px;top:133px;width:0.8px;height:24px;background:#3a393c;"></div>
<svg style="position:absolute;left:704px;top:131.5px;" width="12" height="12" viewBox="0 0 12 12"><rect x="1" y="1.5" width="5.5" height="5" rx="1" fill="none" stroke="#c0bfc2" stroke-width="0.9"/><rect x="5.5" y="5.5" width="5.5" height="5" rx="1" fill="none" stroke="#c0bfc2" stroke-width="0.9"/><path d="M3 4 L9 8" stroke="#c0bfc2" stroke-width="0.8"/></svg>
<svg style="position:absolute;left:720.6px;top:131.5px;" width="12" height="12" viewBox="0 0 12 12"><rect x="1.5" y="1.5" width="9" height="9" rx="2" fill="none" stroke="#c0bfc2" stroke-width="0.9"/><path d="M3.5 3.5 L8.5 8.5 M3.5 3.5 H6 M3.5 3.5 V6 M8.5 8.5 H6 M8.5 8.5 V6" fill="none" stroke="#c0bfc2" stroke-width="0.9"/></svg>
<svg style="position:absolute;left:652px;top:146.5px;" width="12" height="12" viewBox="0 0 12 12"><path d="M2.2 4.5 A4.3 4.3 0 1 1 4 10" fill="none" stroke="#c0bfc2" stroke-width="0.9"/><path d="M0.8 3 L2.4 6 L4.6 3.8 Z" fill="#c0bfc2"/></svg>
<svg style="position:absolute;left:668.7px;top:146.5px;" width="12" height="12" viewBox="0 0 12 12"><path d="M9.8 4.5 A4.3 4.3 0 1 0 8 10" fill="none" stroke="#c0bfc2" stroke-width="0.9"/><path d="M11.2 7 L9.6 10 L7.4 7.8 Z" fill="#c0bfc2"/></svg>
<svg style="position:absolute;left:685.3px;top:146.5px;" width="12" height="12" viewBox="0 0 12 12"><circle cx="6" cy="6.5" r="4.5" fill="none" stroke="#c0bfc2" stroke-width="0.9"/><circle cx="6" cy="7" r="1.2" fill="#c0bfc2"/><path d="M6 2 V5.5" stroke="#c0bfc2" stroke-width="0.9"/></svg>
<svg style="position:absolute;left:704px;top:146.5px;" width="12" height="12" viewBox="0 0 12 12"><path d="M1.5 3 L5 6 L1.5 9 Z" fill="none" stroke="#c0bfc2" stroke-width="0.9"/><path d="M10.5 3 L7 6 L10.5 9 Z" fill="#c0bfc2"/><path d="M6 1 V11" stroke="#c0bfc2" stroke-width="0.8"/></svg>
<svg style="position:absolute;left:720.6px;top:146.5px;" width="12" height="12" viewBox="0 0 12 12"><path d="M3 1 H9 L6 4.5 Z" fill="#c0bfc2"/><path d="M3 11 H9 L6 7.5 Z" fill="none" stroke="#c0bfc2" stroke-width="0.9"/><path d="M1 6 H11" stroke="#c0bfc2" stroke-width="0.8"/></svg>
<div style="left:586px;top:160px;width:149px;height:14px;background:#2e2d30;"></div>
<div style="left:586px;top:163px;width:12px;height:10px;background:#333235;"></div>
<svg style="position:absolute;left:589.5px;top:165px;" width="4.5" height="6" viewBox="0 0 4.5 6"><path d="M0 0.6 H4.2 M0 2.8 H4.2 M0 5 H4.2" stroke="#6a696c" stroke-width="0.75"/></svg>
<div style="left:599px;top:164px;width:34.5px;height:10px;background:#3f3e41;"></div>
<svg style="position:absolute;left:603px;top:164px;" width="10" height="10.5" viewBox="0 0 10 10.5"><path d="M5 0.6 L9.3 3 V7.8 L5 10.2 L0.7 7.8 V3 Z" fill="none" stroke="#bdbcbf" stroke-width="0.9"/><path d="M0.7 3 L5 5.4 L9.3 3 M5 5.4 V10.2 M2 8 L8 4 M2 4 L8 8" fill="none" stroke="#9a999c" stroke-width="0.6"/></svg>
<div class="t" style="left:616.5px;top:166.49px;font-size:6.8px;color:#e0dfe2;font-weight:bold;transform:scaleX(0.8119293471110727);transform-origin:0 0;">Capa</div>
<div style="left:634px;top:164px;width:15.5px;height:10px;background:#39383b;"></div>
<svg style="position:absolute;left:637px;top:165px;" width="10" height="8" viewBox="0 0 10 8"><path d="M5 0.6 L9.3 3 V7 L5 9 L0.7 7 V3 Z" fill="none" stroke="#6a696c" stroke-width="0.8"/></svg>
<div style="left:650px;top:164px;width:17px;height:10px;background:#39383b;"></div>
<svg style="position:absolute;left:654px;top:165px;" width="10" height="8" viewBox="0 0 10 8"><rect x="0.5" y="0.5" width="9" height="7" rx="1" fill="none" stroke="#7a797c" stroke-width="0.7"/><path d="M2 3 H4 M2 5.5 H8" stroke="#7a797c" stroke-width="0.8"/></svg>
<div style="left:586px;top:174px;width:149px;height:49px;background:#454447;"></div>
<div style="left:587px;top:176px;width:23.5px;height:15px;border:1px solid #5d5c5f;box-sizing:border-box;border-radius:1px;background:#48474a"></div>
<div style="left:589px;top:178.5px;width:10px;height:10px;border:1px solid #6e6d70;box-sizing:border-box;border-radius:1px"></div>
<svg style="position:absolute;left:601px;top:182px;" width="8" height="5" viewBox="0 0 8 5"><path d="M0.8 0.8 L4 4 L7.2 0.8" fill="none" stroke="#a8a7aa" stroke-width="0.9"/></svg>
<div style="left:612px;top:176px;width:49.5px;height:15px;border:1px solid #5d5c5f;box-sizing:border-box;border-radius:1px;background:#4a494c"></div>
<div class="t" style="left:621.8px;top:179.81px;font-size:7.2px;color:#d6d5d8;font-weight:normal;transform:scaleX(0.9266442548056202);transform-origin:0 0;">Normal</div>
<svg style="position:absolute;left:651.5px;top:182px;" width="8" height="5" viewBox="0 0 8 5"><path d="M0.8 0.8 L4 4 L7.2 0.8" fill="none" stroke="#a8a7aa" stroke-width="0.9"/></svg>
<div style="left:664px;top:180px;width:47px;height:5.5px;background:repeating-linear-gradient(90deg,#f0f0f0 0 3px,#c0c0c0 3px 6px)"></div>
<div style="left:711px;top:176.5px;width:2.5px;height:12px;background:#6a696c;border-radius:1px"></div>
<div class="t" style="left:715.8px;top:180.51px;font-size:7.2px;color:#d6d5d8;font-weight:normal;transform:scaleX(0.8741531641222565);transform-origin:0 0;">100</div>
<svg style="position:absolute;left:727.5px;top:180px;" width="6" height="10" viewBox="0 0 6 10"><path d="M0.8 3.5 L3 1.2 L5.2 3.5 M0.8 6.5 L3 8.8 L5.2 6.5" fill="none" stroke="#b0afb2" stroke-width="0.8"/></svg>
<svg style="position:absolute;left:594.0px;top:193.0px;" width="12" height="12" viewBox="0 0 12 12"><rect x="1" y="3" width="7" height="7" rx="1" fill="none" stroke="#bcbbbe" stroke-width="0.9"/><rect x="3.5" y="1" width="7" height="7" rx="1" fill="#666" stroke="#bcbbbe" stroke-width="0.9"/></svg>
<svg style="position:absolute;left:610.5px;top:193.0px;" width="12" height="12" viewBox="0 0 12 12"><path d="M6 1 V11 M2 3 H10 M3 5 H9" stroke="#bcbbbe" stroke-width="1"/><path d="M4 11 H8 L7 6 H5 Z" fill="#bcbbbe"/></svg>
<svg style="position:absolute;left:627.0px;top:193.0px;" width="12" height="12" viewBox="0 0 12 12"><path d="M3 1 H6 V6 L4.5 8 L3 6 Z" fill="none" stroke="#bcbbbe" stroke-width="0.9"/><path d="M6 9 C7 11 9 11 10 9" fill="none" stroke="#bcbbbe" stroke-width="0.9"/></svg>
<svg style="position:absolute;left:644.0px;top:193.0px;" width="12" height="12" viewBox="0 0 12 12"><rect x="2.5" y="5" width="7" height="6" fill="#bcbbbe"/><path d="M4 5 V3.5 C4 1.5 8 1.5 8 3.5 V5" fill="none" stroke="#bcbbbe" stroke-width="1"/></svg>
<svg style="position:absolute;left:661.0px;top:193.0px;" width="12" height="12" viewBox="0 0 12 12"><path d="M2 10 L10 2 M2 6 L6 2 M6 10 L10 6" stroke="#bcbbbe" stroke-width="1.1" stroke-dasharray="1.2 1"/><rect x="1" y="8" width="3.5" height="3" fill="#bcbbbe"/></svg>
<svg style="position:absolute;left:680.5px;top:193.0px;" width="13" height="12" viewBox="0 0 13 12"><path d="M1.5 2 H7 V8 H1.5 Z" fill="none" stroke="#6e6d70" stroke-width="0.9"/><path d="M6 7 L10 11 M10 7 L6 11 M8 5 L12 3" stroke="#6e6d70" stroke-width="0.9"/></svg>
<svg style="position:absolute;left:700.0px;top:193.0px;" width="13" height="12" viewBox="0 0 13 12"><path d="M1.5 2 H8 L1.5 8 Z" fill="none" stroke="#6e6d70" stroke-width="0.9"/><path d="M6 7 L10 11 M10 7 L6 11 M8 5 L12 3" stroke="#6e6d70" stroke-width="0.9"/></svg>
<div style="left:716px;top:191.5px;width:19px;height:15px;border:1px solid #5d5c5f;box-sizing:border-box"></div>
<div style="left:718.5px;top:195px;width:6px;height:6px;background:#3a80f0;"></div>
<div style="left:722px;top:198.5px;width:5px;height:5px;background:#ffffff;"></div>
<svg style="position:absolute;left:727.5px;top:197.5px;" width="7" height="5" viewBox="0 0 7 5"><path d="M0.6 0.6 L3.5 3.8 L6.4 0.6" fill="none" stroke="#a8a7aa" stroke-width="0.9"/></svg>
<svg style="position:absolute;left:603.0px;top:208.0px;" width="12" height="12" viewBox="0 0 12 12"><path d="M1.5 1.5 H9.5 V7 L6 10.5 H1.5 Z" fill="none" stroke="#bcbbbe" stroke-width="0.9"/><circle cx="9.5" cy="9.5" r="2.2" fill="#454447" stroke="#bcbbbe" stroke-width="0.8"/></svg>
<svg style="position:absolute;left:619.5px;top:208.0px;" width="12" height="12" viewBox="0 0 12 12"><rect x="1.5" y="1.5" width="8" height="8" rx="1" fill="none" stroke="#bcbbbe" stroke-width="0.9"/><circle cx="5.5" cy="5.5" r="2.2" fill="none" stroke="#bcbbbe" stroke-width="0.8"/><circle cx="9.5" cy="9.5" r="2.2" fill="#454447" stroke="#bcbbbe" stroke-width="0.8"/></svg>
<svg style="position:absolute;left:636.0px;top:208.0px;" width="12" height="12" viewBox="0 0 12 12"><path d="M1 3 H4 L5 4 H10 V9.5 H1 Z" fill="#bcbbbe"/><circle cx="9.5" cy="9.5" r="2.2" fill="#454447" stroke="#bcbbbe" stroke-width="0.8"/></svg>
<svg style="position:absolute;left:653.0px;top:208.0px;" width="12" height="12" viewBox="0 0 12 12"><rect x="1" y="4.5" width="6" height="6" rx="1" fill="none" stroke="#6e6d70" stroke-width="0.9"/><rect x="5" y="1" width="6" height="6" rx="1" fill="none" stroke="#6e6d70" stroke-width="0.9"/></svg>
<svg style="position:absolute;left:670.0px;top:208.0px;" width="12" height="12" viewBox="0 0 12 12"><rect x="1" y="4.5" width="6" height="6" rx="1" fill="none" stroke="#bcbbbe" stroke-width="0.9"/><rect x="5" y="1" width="6" height="6" rx="1" fill="#454447" stroke="#bcbbbe" stroke-width="0.9"/></svg>
<svg style="position:absolute;left:686.8px;top:208.0px;" width="12" height="12" viewBox="0 0 12 12"><rect x="1.5" y="1.5" width="9" height="9" rx="1.5" fill="#bcbbbe"/><circle cx="6" cy="6" r="2.5" fill="#333"/></svg>
<svg style="position:absolute;left:704.0px;top:208.0px;" width="12" height="12" viewBox="0 0 12 12"><rect x="1" y="2.5" width="10" height="7.5" rx="1" fill="none" stroke="#6e6d70" stroke-width="0.9"/><circle cx="7.5" cy="6.2" r="1.8" fill="none" stroke="#6e6d70" stroke-width="0.8"/><path d="M2 6 H4.5" stroke="#6e6d70"/></svg>
<svg style="position:absolute;left:720.5px;top:208.0px;" width="12" height="12" viewBox="0 0 12 12"><path d="M2 2.5 H10 M4.5 2.5 V1.2 H7.5 V2.5 M2.8 3 L3.3 11 H8.7 L9.2 3" fill="none" stroke="#bcbbbe" stroke-width="0.9"/><path d="M5 4.5 V9.5 M7 4.5 V9.5" stroke="#bcbbbe" stroke-width="0.6"/></svg>
<div style="left:586px;top:223px;width:149px;height:243px;background:#39383b;"></div>
<div style="left:586px;top:336px;width:146px;height:130px;background:repeating-linear-gradient(180deg,#3a393c 0 2px,#39383b 2px 4px)"></div>
<div style="left:731.5px;top:223px;width:4px;height:243px;background:#3c3b3e;"></div>
<div style="left:586px;top:223px;width:146px;height:56px;background:#3a393c;"></div>
<div style="left:601px;top:223px;width:0.8px;height:113px;background:#2f2e31;"></div>
<div style="left:615px;top:223px;width:0.8px;height:113px;background:#2f2e31;"></div>
<div style="left:615.8px;top:223px;width:116.2px;height:56px;background:#5d6680;"></div>
<div style="left:618px;top:224px;width:54.5px;height:53px;box-sizing:border-box;border:1px solid #d8dae0;background:#1a1a1c"></div>
<div style="left:620.3px;top:226px;width:50.2px;height:49.5px;background:conic-gradient(#fff 0 25%,#cacaca 0 50%,#fff 0 75%,#cacaca 0) 0 0/4.8px 4.8px"></div>
<div class="t" style="left:677.1px;top:233.81px;font-size:7.2px;color:#e0e1ea;font-weight:normal;transform:scaleX(0.8505694211524337);transform-origin:0 0;">100 % Normal</div>
<div class="t" style="left:677px;top:268.41px;font-size:7.2px;color:#dcdde8;font-weight:normal;transform:scaleX(0.81841872886649);transform-origin:0 0;">Capa 1</div>
<svg style="position:absolute;left:723px;top:249px;" width="5" height="5" viewBox="0 0 5 5"><path d="M0 0.7 H4.6 M0 2.4 H4.6 M0 4.1 H4.6" stroke="#1e2030" stroke-width="0.8"/></svg>
<svg style="position:absolute;left:588px;top:246px;" width="11" height="8" viewBox="0 0 11 8"><path d="M0.8 5.5 C2.5 1.5 8.5 1.5 10.2 5.5" fill="none" stroke="#c8c7ca" stroke-width="1"/><circle cx="5.5" cy="5" r="1.7" fill="#d0cfd2"/></svg>
<svg style="position:absolute;left:602px;top:246px;" width="11" height="10" viewBox="0 0 11 10"><path d="M2.5 7.5 L9 1.5" stroke="#c8c7ca" stroke-width="1.3"/><path d="M1 8.6 H9.6" stroke="#b8b7ba" stroke-width="1"/><path d="M1.5 7.5 L3 8.6 L1 8.8 Z" fill="#c8c7ca"/></svg>
<div style="left:586px;top:279px;width:146px;height:1px;background:#2a292c;"></div>
<div style="left:620px;top:282px;width:51px;height:51px;background:#fdfcfe;outline:1px solid #1f1e21"></div>
<div style="left:679px;top:282.5px;width:11px;height:10.5px;background:#fff"></div>
<svg style="position:absolute;left:679px;top:282.5px;" width="11" height="10.5" viewBox="0 0 11 10.5"><path d="M3 2 H8 V8.5 H3 Z" fill="none" stroke="#222" stroke-width="0.9"/><path d="M3 7 L4.5 8.5" stroke="#222"/></svg>
<div class="t" style="left:677px;top:324.41px;font-size:7.2px;color:#cfced1;font-weight:normal;transform:scaleX(0.8689040947105463);transform-origin:0 0;">Papel</div>
<svg style="position:absolute;left:723px;top:305.5px;" width="5" height="5" viewBox="0 0 5 5"><path d="M0 0.7 H4.6 M0 2.4 H4.6 M0 4.1 H4.6" stroke="#1e1d20" stroke-width="0.8"/></svg>
<svg style="position:absolute;left:588px;top:303px;" width="11" height="8" viewBox="0 0 11 8"><path d="M0.8 5.5 C2.5 1.5 8.5 1.5 10.2 5.5" fill="none" stroke="#c8c7ca" stroke-width="1"/><circle cx="5.5" cy="5" r="1.7" fill="#d0cfd2"/></svg>
<div style="left:605px;top:303px;width:6.5px;height:7px;border:1px solid #2a292c;box-sizing:border-box;border-radius:1px"></div>
<div style="left:586px;top:335px;width:146px;height:1.5px;background:#2a292c;"></div>
<div style="left:735px;top:27px;width:26px;height:439px;background:#333235;"></div>
<div style="left:735px;top:27px;width:23px;height:149px;background:#414043;"></div>
<div style="left:757.5px;top:27px;width:3.5px;height:149px;background:#39383b;"></div>
<div style="left:736.5px;top:31px;width:21px;height:17px;background:#49484b;"></div>
<svg style="position:absolute;left:741px;top:33px;" width="12" height="12" viewBox="0 0 12 12"><rect x="2.5" y="1.5" width="8.5" height="7.5" rx="1.5" fill="#5e5d60" stroke="#8e8d90" stroke-width="0.9"/><path d="M1 3 V10.5 H9" fill="none" stroke="#8e8d90" stroke-width="0.9"/></svg>
<div style="left:736.5px;top:49px;width:21px;height:42px;background:#49484b;"></div>
<svg style="position:absolute;left:741px;top:53.5px;" width="12" height="12" viewBox="0 0 12 12"><rect x="1.5" y="1.5" width="9" height="8" rx="1.5" fill="#5e5d60" stroke="#8e8d90" stroke-width="0.8"/><path d="M3.5 4 H8.5 M3.5 9 H8.5" stroke="#8e8d90" stroke-width="0.8"/></svg>
<svg style="position:absolute;left:741px;top:74px;" width="12" height="12" viewBox="0 0 12 12"><rect x="1.5" y="1.5" width="9" height="9" rx="1.5" fill="#5e5d60" stroke="#8e8d90" stroke-width="0.8"/><path d="M1.5 6 H10.5 M6 1.5 V10.5" stroke="#8e8d90" stroke-width="0.8"/><circle cx="3.8" cy="3.8" r="1" fill="#bbb"/><circle cx="8.2" cy="8.2" r="1" fill="#bbb"/></svg>
<div style="left:735px;top:91px;width:23px;height:1.5px;background:#2f2e31;"></div>
<div style="left:736.5px;top:92.5px;width:21px;height:17.5px;background:#49484b;"></div>
<svg style="position:absolute;left:741px;top:94.5px;" width="12" height="12" viewBox="0 0 12 12"><path d="M6 1 L10.5 3.5 L6 6 L1.5 3.5 Z M1.5 5.8 L6 8.3 L10.5 5.8 M1.5 8 L6 10.5 L10.5 8" fill="none" stroke="#8e8d90" stroke-width="0.9"/></svg>
<div style="left:736.5px;top:111px;width:21px;height:38px;background:#49484b;"></div>
<svg style="position:absolute;left:741px;top:115px;" width="12" height="12" viewBox="0 0 12 12"><path d="M6 1 L10.5 3.5 L6 6 L1.5 3.5 Z M1.5 5.8 L6 8.3 L8 7.2 M1.5 8 L6 10.5" fill="none" stroke="#8e8d90" stroke-width="0.9"/><circle cx="9.5" cy="9.5" r="2" fill="none" stroke="#8e8d90" stroke-width="0.8"/></svg>
<svg style="position:absolute;left:741px;top:135px;" width="12" height="12" viewBox="0 0 12 12"><rect x="1.5" y="1.5" width="9" height="9" rx="1.5" fill="none" stroke="#8e8d90" stroke-width="0.8"/><path d="M3 4 H5 M3 7 H9 M3 8.5 H9" stroke="#8e8d90" stroke-width="1"/></svg>
<div style="left:735px;top:149px;width:23px;height:5px;background:#2f2e31;"></div>
<div style="left:736.5px;top:154px;width:21px;height:22px;background:#49484b;"></div>
<svg style="position:absolute;left:741px;top:159px;" width="12" height="12" viewBox="0 0 12 12"><path d="M1 2.5 H4.5 L5.5 3.5 H11 V10.5 H1 Z" fill="none" stroke="#8e8d90" stroke-width="0.9"/><path d="M3 5 L9 9 M3 9 L9 5 M6 4 V10 M2 7 H10" stroke="#6e6d70" stroke-width="0.6"/></svg>
<div style="left:735px;top:176px;width:23px;height:290px;background:#333235;"></div>
<div style="left:761px;top:0px;width:39px;height:466px;background:#59585b;"></div>
<div style="left:760px;top:0px;width:1.5px;height:466px;background:#3e3d40;"></div>
<div style="left:761px;top:0px;width:39px;height:1px;background:#2a292c;"></div>
<div style="left:769px;top:12px;width:23.5px;height:15px;background:#dcdbde;border-radius:3px;border:1px solid #3e3d40"></div>
<div class="t" style="left:780.75px;width:0;display:flex;justify-content:center;top:16.00px;font-size:7.2px;color:#232225;font-weight:bold;"><span style="display:inline-block;transform:scaleX(0.85);transform-origin:50% 0">Esc</span></div>
<div style="left:762px;top:38.3px;width:38px;height:1.5px;background:#6c6b6e;"></div>
<div style="left:769px;top:50px;width:23.5px;height:15.5px;background:#dcdbde;border-radius:3px;border:1px solid #3e3d40"></div>
<div class="t" style="left:780.75px;width:0;display:flex;justify-content:center;top:54.25px;font-size:7.2px;color:#232225;font-weight:bold;"><span style="display:inline-block;transform:scaleX(0.85);transform-origin:50% 0">Ctrl</span></div>
<div style="left:762px;top:76.5px;width:38px;height:1.5px;background:#6c6b6e;"></div>
<div style="left:762px;top:77.5px;width:38px;height:37.5px;background:#5e6782"></div>
<div style="left:768.5px;top:88px;width:24px;height:16px;border:1px solid #d8d9e2;box-sizing:border-box;border-radius:2.5px;background:#9a9eb0"></div>
<svg style="position:absolute;left:776px;top:89px;" width="9" height="14" viewBox="0 0 9 14"><path d="M4.5 1.5 L8 5.5 H6 V10 H3 V5.5 H1 Z" fill="none" stroke="#1e2030" stroke-width="0.9"/></svg>
<div class="t" style="left:772px;top:106.26px;font-size:8.2px;color:#e4e6ee;font-weight:normal;transform:scaleX(1.066573214537393);transform-origin:0 0;">Shift</div>
<div style="left:762px;top:115px;width:38px;height:1.5px;background:#6c6b6e;"></div>
<div style="left:769px;top:126.5px;width:23.5px;height:15.5px;background:#dcdbde;border-radius:3px;border:1px solid #3e3d40"></div>
<div class="t" style="left:780.75px;width:0;display:flex;justify-content:center;top:130.75px;font-size:7.2px;color:#232225;font-weight:bold;"><span style="display:inline-block;transform:scaleX(0.85);transform-origin:50% 0">Alt</span></div>
<div style="left:762px;top:153.5px;width:38px;height:1.5px;background:#6c6b6e;"></div>
<div style="left:769px;top:165px;width:23.5px;height:16px;background:#dddcdf;border-radius:2.5px;box-shadow:0 0 0 0.8px #8a898c"></div>
<div style="left:772px;top:173.5px;width:17.5px;height:4px;border:1px solid #555;border-top:none;box-sizing:border-box;border-radius:0 0 1.5px 1.5px"></div>
<div class="t" style="left:769.2px;top:182.76px;font-size:8.2px;color:#e0dfe2;font-weight:normal;transform:scaleX(1.002169395660671);transform-origin:0 0;">Space</div>
<div style="left:762px;top:192.3px;width:38px;height:1.5px;background:#6c6b6e;"></div>
<div style="left:773.1px;top:203.6px;width:15.2px;height:15px;background:#dcdbde;border-radius:3px;border:1px solid #3e3d40"></div>
<div class="t" style="left:780.7px;width:0;display:flex;justify-content:center;top:207.60px;font-size:7.2px;color:#232225;font-weight:bold;"><span style="display:inline-block;transform:scaleX(0.9);transform-origin:50% 0">T1</span></div>
<div style="left:762px;top:230.29999999999998px;width:38px;height:1.5px;background:#6c6b6e;"></div>
<div style="left:773.1px;top:242.04999999999998px;width:15.2px;height:15px;background:#dcdbde;border-radius:3px;border:1px solid #3e3d40"></div>
<div class="t" style="left:780.7px;width:0;display:flex;justify-content:center;top:246.05px;font-size:7.2px;color:#232225;font-weight:bold;"><span style="display:inline-block;transform:scaleX(0.9);transform-origin:50% 0">T2</span></div>
<div style="left:762px;top:268.75px;width:38px;height:1.5px;background:#6c6b6e;"></div>
<div style="left:773.1px;top:280.5px;width:15.2px;height:15px;background:#dcdbde;border-radius:3px;border:1px solid #3e3d40"></div>
<div class="t" style="left:780.7px;width:0;display:flex;justify-content:center;top:284.50px;font-size:7.2px;color:#232225;font-weight:bold;"><span style="display:inline-block;transform:scaleX(0.9);transform-origin:50% 0">T3</span></div>
<div style="left:762px;top:307.20000000000005px;width:38px;height:1.5px;background:#6c6b6e;"></div>
<div style="left:773.1px;top:318.95px;width:15.2px;height:15px;background:#dcdbde;border-radius:3px;border:1px solid #3e3d40"></div>
<div class="t" style="left:780.7px;width:0;display:flex;justify-content:center;top:322.95px;font-size:7.2px;color:#232225;font-weight:bold;"><span style="display:inline-block;transform:scaleX(0.9);transform-origin:50% 0">T4</span></div>
<div style="left:762px;top:345.65000000000003px;width:38px;height:1.5px;background:#6c6b6e;"></div>
<div style="left:773.1px;top:357.4px;width:15.2px;height:15px;background:#dcdbde;border-radius:3px;border:1px solid #3e3d40"></div>
<div class="t" style="left:780.7px;width:0;display:flex;justify-content:center;top:361.40px;font-size:7.2px;color:#232225;font-weight:bold;"><span style="display:inline-block;transform:scaleX(0.9);transform-origin:50% 0">T5</span></div>
<div style="left:762px;top:384.1px;width:38px;height:1.5px;background:#6c6b6e;"></div>
<div style="left:773.1px;top:395.84999999999997px;width:15.2px;height:15px;background:#dcdbde;border-radius:3px;border:1px solid #3e3d40"></div>
<div class="t" style="left:780.7px;width:0;display:flex;justify-content:center;top:399.85px;font-size:7.2px;color:#232225;font-weight:bold;"><span style="display:inline-block;transform:scaleX(0.9);transform-origin:50% 0">T6</span></div>
<div style="left:762px;top:422.55px;width:38px;height:1.5px;background:#6c6b6e;"></div>
<div style="left:773.1px;top:434.29999999999995px;width:15.2px;height:15px;background:#dcdbde;border-radius:3px;border:1px solid #3e3d40"></div>
<div class="t" style="left:780.7px;width:0;display:flex;justify-content:center;top:438.30px;font-size:7.2px;color:#232225;font-weight:bold;"><span style="display:inline-block;transform:scaleX(0.9);transform-origin:50% 0">T7</span></div>
<div style="left:762px;top:461.0px;width:38px;height:1.5px;background:#6c6b6e;"></div>
<div style="left:795.8px;top:185.3px;width:5px;height:50.2px;background:#6c6b6e;border-radius:2.5px 0 0 2.5px"></div>
<div style="left:784.5px;top:332.5px;width:31px;height:31px;border-radius:50%;border:1px solid #d0cfd2;box-sizing:border-box;background:rgba(89,88,91,0.3)"></div>
<svg style="position:absolute;left:789px;top:343px;" width="6" height="10" viewBox="0 0 6 10"><path d="M4.5 1 L1 5 L4.5 9" fill="none" stroke="#d8d7da" stroke-width="1"/></svg>
<div style="left:796px;top:339px;width:6px;height:18px;border:1px solid #d0cfd2;box-sizing:border-box;border-radius:1px"></div>
<div style="left:780.5px;top:374px;width:22px;height:22px;border-radius:50%;background:#4a494c"></div>
<svg style="position:absolute;left:785px;top:380px;" width="12" height="12" viewBox="0 0 12 12"><path d="M10 1 L3 8 L1.2 10.8 L4 9 L11 2 Z" fill="#9a999c"/></svg>
</body></html>
